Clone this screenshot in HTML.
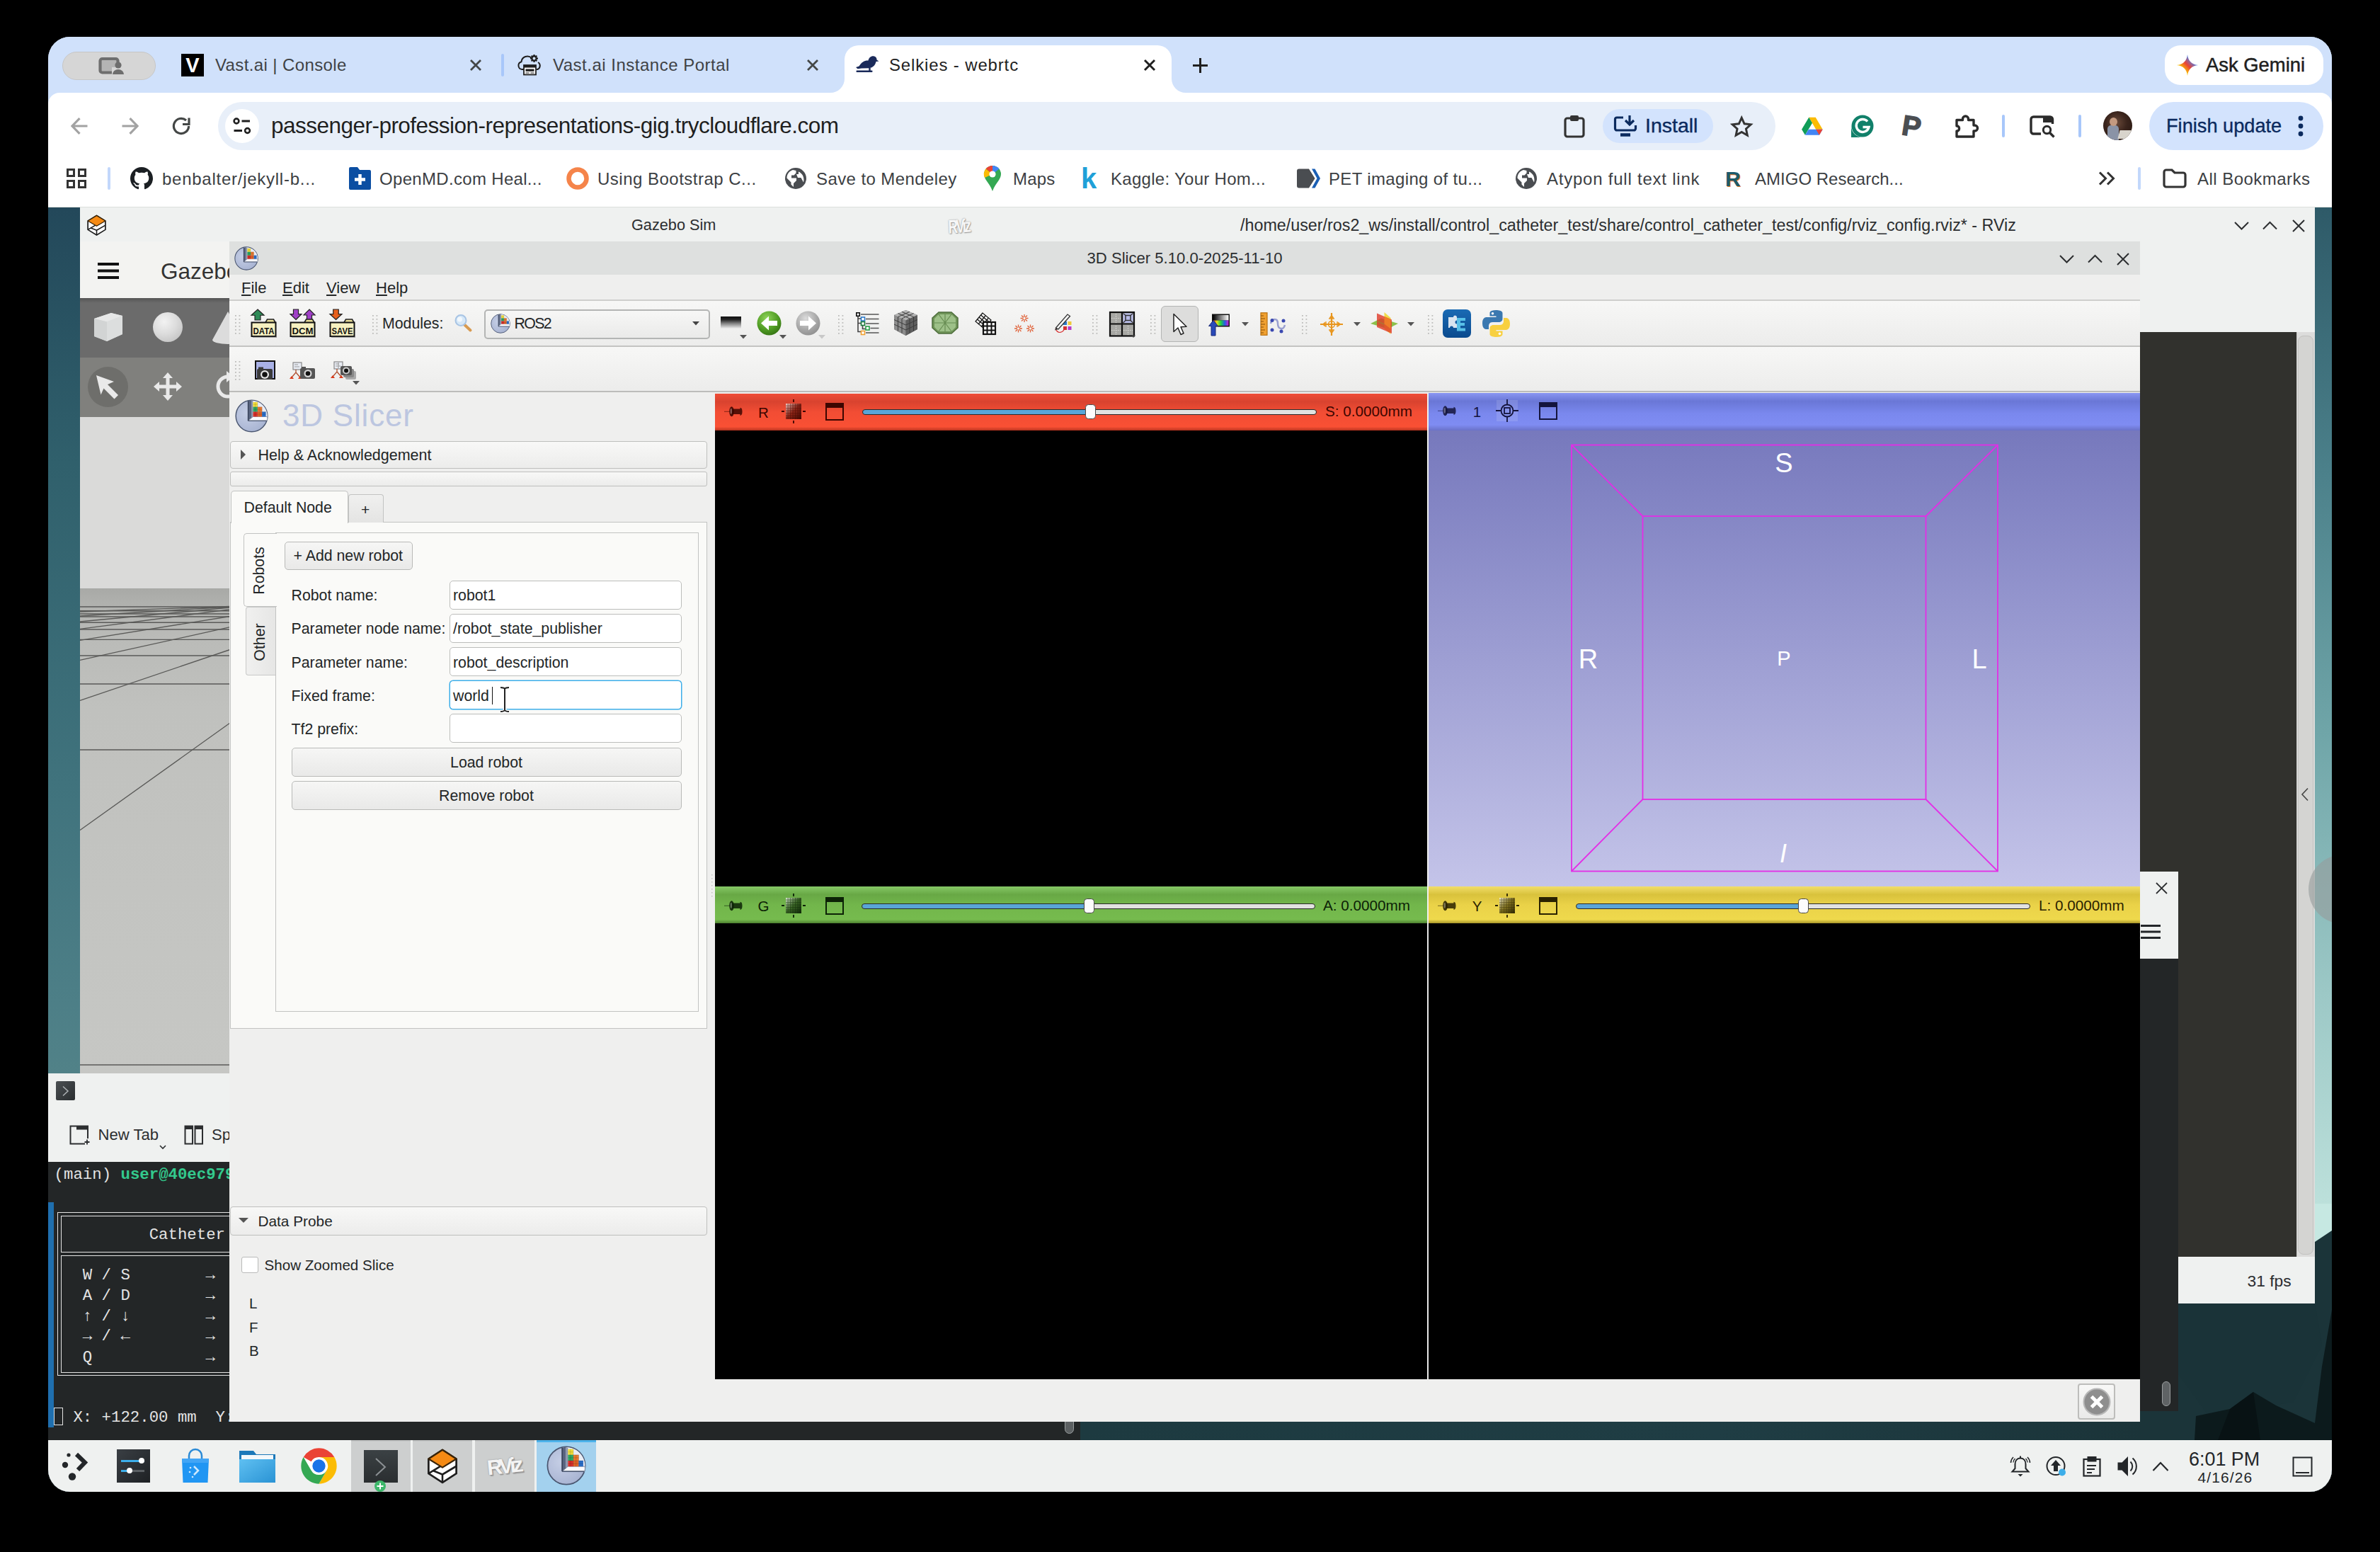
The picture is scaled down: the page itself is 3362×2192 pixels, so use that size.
<!DOCTYPE html>
<html>
<head>
<meta charset="utf-8">
<title>Selkies - webrtc</title>
<style>
*{box-sizing:border-box;margin:0;padding:0}
html,body{width:3362px;height:2192px;background:#000;overflow:hidden}
body{font-family:"Liberation Sans",sans-serif;color:#1f1f1f;position:relative}
.a{position:absolute}
.t{position:absolute;white-space:nowrap;line-height:1}
#win{position:absolute;left:68px;top:52px;width:3226px;height:2055px;border-radius:31px;overflow:hidden;background:#d0e1fb}
#g{position:absolute;left:-68px;top:-52px;width:3362px;height:2192px}
svg{position:absolute;overflow:visible}
/* chrome */
.tabt{font-size:24px;color:#3f4245;top:80px}
.bm{font-size:24px;color:#3c4043;top:240.500px}
.qt{font-size:21.3px;color:#232627}
.mono{white-space:pre;font-family:"Liberation Mono",monospace;font-size:22.350px;color:#e8e8e8}
.inp{position:absolute;left:635px;width:328px;height:41px;border:1.700px solid #bcbdbb;border-radius:5px;background:#fff;margin-top:-.7px}
.btn{position:absolute;border:1.700px solid #b9bab8;border-radius:5px;background:linear-gradient(#f6f6f5,#e9e9e8);text-align:center}
.box{position:absolute;border:1.700px solid #bebfbd;border-radius:4px;background:linear-gradient(#f8f8f7,#ececeb)}
.sl{position:absolute;height:8.500px;border-radius:4.500px;border:1.800px solid #2a2a2a;margin-top:.8px}
.hd{position:absolute;width:15px;height:21px;border-radius:4.500px;background:#fcfcfc;border:1.600px solid #4a4a4a;margin-top:.8px}
</style>
</head>
<body>
<div id="win"><div id="g">

<!-- ===== CHROME TAB STRIP ===== -->
<div class="a" id="tabstrip" style="left:68px;top:52px;width:3226px;height:80px;background:#d0e1fb"></div>
<div class="a" style="left:88px;top:73px;width:132px;height:40px;border-radius:20px;background:#d6d6d6;border:1px solid #c6c6c6"></div>
<svg style="left:138px;top:78px" width="40" height="30" viewBox="0 0 40 30"><rect x="3.5" y="5" width="25" height="19.5" rx="3" fill="#b4b4b4" stroke="#6e6e6e" stroke-width="4.2"/><rect x="20" y="17" width="20" height="12" fill="#d6d6d6"/><circle cx="29" cy="14" r="4.6" fill="#6e6e6e"/><path d="M21 27 a8 7 0 0 1 16 0 z" fill="#6e6e6e"/></svg>
<!-- tab 1 -->
<div class="a" style="left:256px;top:76px;width:32px;height:32px;background:#000"></div>
<div class="t" style="left:259px;top:78px;font-size:29px;font-weight:bold;color:#fff;width:26px;text-align:center">V</div>
<div class="t tabt" style="left:304px;letter-spacing:0.38px">Vast.ai | Console</div>
<svg style="left:664px;top:84px" width="16" height="16"><path d="M1 1L15 15M15 1L1 15" stroke="#444746" stroke-width="2.8" fill="none"/></svg>
<div class="a" style="left:708px;top:76px;width:4px;height:32px;border-radius:2px;background:#a8c7fa"></div>
<!-- tab 2 -->
<svg style="left:731px;top:76px" width="34" height="34" viewBox="0 0 34 34"><path d="M9 22 H6.5 a5.5 5.5 0 0 1 -1 -10.8 A8.5 8.5 0 0 1 20 6" fill="none" stroke="#1f1f1f" stroke-width="2"/><path d="M29 12 a5.5 5.5 0 0 1 -1 10 H27" fill="none" stroke="#1f1f1f" stroke-width="2"/><circle cx="23.5" cy="6.5" r="3.2" fill="none" stroke="#1f1f1f" stroke-width="2.4"/><path d="M23.5 1v2.2M23.5 9.8V12M18 6.5h2.2M26.8 6.5H29M19.6 2.6l1.6 1.6M25.8 8.8l1.6 1.6M27.4 2.6l-1.6 1.6M21.2 8.8l-1.6 1.6" stroke="#1f1f1f" stroke-width="2"/><rect x="9" y="16" width="17" height="13.5" fill="#fff" stroke="#1f1f1f" stroke-width="1.8"/><rect x="9" y="16" width="17" height="3.5" fill="#1f1f1f"/><rect x="11.5" y="21.5" width="12" height="3.3" fill="#1f1f1f"/><path d="M11.5 27h5M18.5 27h5" stroke="#1f1f1f" stroke-width="1.2"/></svg>
<div class="t tabt" style="left:781px;letter-spacing:0.5px">Vast.ai Instance Portal</div>
<svg style="left:1140px;top:84px" width="16" height="16"><path d="M1 1L15 15M15 1L1 15" stroke="#444746" stroke-width="2.8" fill="none"/></svg>
<!-- active tab -->
<div class="a" style="left:1193px;top:64px;width:462px;height:68px;background:#fff;border-radius:20px 20px 0 0"></div>
<svg style="left:1173px;top:111px" width="20" height="20"><path d="M20 0V20H0A20 20 0 0 0 20 0z" fill="#fff"/></svg>
<svg style="left:1655px;top:111px" width="20" height="20"><path d="M0 0V20H20A20 20 0 0 1 0 0z" fill="#fff"/></svg>
<svg style="left:1208px;top:78px" width="34" height="28" viewBox="0 0 34 28"><path d="M1 17 L5.5 15.5 C9 9.5 14 7 18.5 7.5 C19.5 3 23 0.5 27 1.5 C29.5 2.3 30.8 4.5 30.5 6.5 L33.5 8.5 L29.5 9 C28.5 14 25 17.5 20 18.2 L9 18.4 L3.5 19.3 z" fill="#1a2a5a"/><rect x="1.5" y="21.5" width="23" height="2.6" rx="1" fill="#1a2a5a"/><path d="M20.5 18 v5" stroke="#1a2a5a" stroke-width="2.4"/></svg>
<div class="t tabt" style="color:#1f1f1f;left:1256px;letter-spacing:0.85px">Selkies - webrtc</div>
<svg style="left:1616px;top:84px" width="16" height="16"><path d="M1 1L15 15M15 1L1 15" stroke="#1f1f1f" stroke-width="2.9" fill="none"/></svg>
<svg style="left:1685px;top:82px" width="21" height="21"><path d="M10.5 0V21M0 10.5H21" stroke="#1f1f1f" stroke-width="3" fill="none"/></svg>
<!-- ask gemini -->
<div class="a" style="left:3058px;top:64px;width:224px;height:56px;border-radius:22px;background:#fff"></div>
<svg style="left:3075px;top:77px" width="30" height="30" viewBox="0 0 30 30"><defs><linearGradient id="gm" x1="0" y1="1" x2="1" y2="0"><stop offset="0" stop-color="#34a853"/><stop offset=".3" stop-color="#fbbc04"/><stop offset=".5" stop-color="#ea4335"/><stop offset=".75" stop-color="#4285f4"/><stop offset="1" stop-color="#1a73e8"/></linearGradient></defs><path d="M15 0 C16 9 21 14 30 15 C21 16 16 21 15 30 C14 21 9 16 0 15 C9 14 14 9 15 0z" fill="url(#gm)"/></svg>
<div class="t" style="left:3116px;top:78px;font-size:27.4px;color:#1f1f1f;-webkit-text-stroke:0.5px #1f1f1f">Ask Gemini</div>

<!-- ===== TOOLBAR + BOOKMARKS ===== -->
<div class="a" id="toolbar" style="left:68px;top:131px;width:3226px;height:162px;background:#fff;border-radius:16px 16px 0 0"></div>
<svg style="left:100px;top:166px" width="24" height="24"><path d="M23.5 12H3M12.5 1.2L2 12l10.5 10.8" stroke="#a2a2a2" stroke-width="3.2" fill="none"/></svg>
<svg style="left:172px;top:166px" width="24" height="24"><path d="M.5 12H21M11.5 1.2L22 12 11.5 22.8" stroke="#a2a2a2" stroke-width="3.2" fill="none"/></svg>
<svg style="left:242px;top:164px" width="28" height="28" viewBox="0 0 28 28"><path d="M24.6 14 A10.6 10.6 0 1 1 21 6" stroke="#444746" stroke-width="3.2" fill="none"/><path d="M25 2.5v9h-9" stroke="#444746" stroke-width="3.2" fill="none"/></svg>
<div class="a" style="left:308px;top:144px;width:2200px;height:68px;border-radius:34px;background:#e8eff9"></div>
<div class="a" style="left:318px;top:154px;width:48px;height:48px;border-radius:24px;background:#fff"></div>
<svg style="left:329px;top:165px" width="26" height="26" viewBox="0 0 26 26"><circle cx="5" cy="6" r="3.4" fill="none" stroke="#1f1f1f" stroke-width="2.6"/><path d="M12.5 6H24" stroke="#1f1f1f" stroke-width="2.8"/><circle cx="20.5" cy="19.5" r="3.4" fill="none" stroke="#1f1f1f" stroke-width="2.6"/><path d="M1.5 19.5H13" stroke="#1f1f1f" stroke-width="2.8"/></svg>
<div class="t" style="left:383px;top:161.500px;font-size:31.500px;letter-spacing:-0.52px;color:#1f1f1f">passenger-profession-representations-gig.trycloudflare.com</div>
<!-- clipboard -->
<svg style="left:2209px;top:161px" width="30" height="34" viewBox="0 0 30 34"><rect x="2" y="6" width="26" height="26" rx="3" fill="none" stroke="#333" stroke-width="3.2"/><rect x="9" y="2" width="12" height="8" rx="2" fill="#333"/></svg>
<div class="a" style="left:2264px;top:154px;width:156px;height:48px;border-radius:24px;background:#d3e3fd"></div>
<svg style="left:2279px;top:163px" width="34" height="30" viewBox="0 0 34 30"><path d="M14 3H5a2.5 2.5 0 0 0 -2.5 2.5v13A2.5 2.5 0 0 0 5 21h24a2.5 2.5 0 0 0 2.500 -2.500V14" fill="none" stroke="#0b2a5e" stroke-width="3.2"/><path d="M10 27.500h14" stroke="#0b2a5e" stroke-width="4.500"/><path d="M23 0v12M17 7l6 6 6-6" fill="none" stroke="#0b2a5e" stroke-width="3.2"/></svg>
<div class="t" style="left:2324px;top:163px;font-size:28.5px;color:#0b2a5e;-webkit-text-stroke:0.4px #0b2a5e">Install</div>
<svg style="left:2444.500px;top:163.500px" width="30.500" height="29" viewBox="0 0 34 32"><path d="M17 2.500l4.300 9.400 10.200 1.100-7.600 6.900 2.100 10.100L17 24.900 8 30l2.100-10.100-7.600-6.900 10.200-1.100z" fill="none" stroke="#333" stroke-width="3.300"/></svg>
<!-- extensions -->
<svg style="left:2545px;top:165px" width="30" height="26.500" viewBox="0 0 36 32"><path d="M12.300 1h11.400l12 20.500H24.300z" fill="#fbbc04"/><path d="M12.300 1L0 21.500 5.800 31 18 10.500z" fill="#0f9d58"/><path d="M11.800 21.500h24L30 31H5.800z" fill="#4285f4"/><path d="M24.300 21.500H35.700L30 31z" fill="#ea4335"/></svg>
<svg style="left:2615px;top:162px" width="32" height="32" viewBox="0 0 32 32"><circle cx="16" cy="16" r="15.500" fill="#11806a"/><path d="M0 16V32H16A16 16 0 0 1 0 16z" fill="#11806a"/><path d="M23 9.500A9 9 0 1 0 25 17.500H16.500" fill="none" stroke="#fff" stroke-width="3.400"/></svg>
<div class="t" style="left:2687px;top:158px;font-size:40px;font-weight:bold;color:#4b4e52;transform:rotate(9deg);-webkit-text-stroke:1.500px #4b4e52">P</div>
<svg style="left:2760px;top:160px" width="36" height="36" viewBox="0 0 36 36"><path d="M4 9.500h8.500V8a4 4 0 0 1 8 0v1.500H28V17h1.500a4 4 0 0 1 0 8H28v8H4v-8h1.500a4 4 0 0 0 0 -7H4z" fill="none" stroke="#2b2b2b" stroke-width="3.400" stroke-linejoin="round"/></svg>
<div class="a" style="left:2828px;top:162px;width:4px;height:32px;border-radius:2px;background:#a8c7fa"></div>
<svg style="left:2866px;top:163px" width="38" height="32" viewBox="0 0 38 32"><path d="M17 26H6.500A3.500 3.500 0 0 1 3 22.500v-17A3.500 3.500 0 0 1 6.500 2H30a3.500 3.500 0 0 1 3.500 3.500V12" fill="none" stroke="#2b2b2b" stroke-width="3.400"/><rect x="20" y="2" width="13.500" height="8" fill="#2b2b2b"/><circle cx="25.500" cy="20.500" r="5.200" fill="none" stroke="#2b2b2b" stroke-width="3"/><path d="M29.500 24.500l6 6" stroke="#2b2b2b" stroke-width="3.400"/></svg>
<div class="a" style="left:2936px;top:162px;width:4px;height:32px;border-radius:2px;background:#a8c7fa"></div>
<div class="a" style="left:2971px;top:157px;width:41px;height:41px;border-radius:50%;background:radial-gradient(circle at 45% 40%,#6a4a3a 0,#3a241c 45%,#24150f 100%);overflow:hidden"><div class="a" style="left:6px;top:20px;width:16px;height:22px;background:#8a93a6;border-radius:5px 5px 0 0"></div><div class="a" style="left:9px;top:9px;width:11px;height:12px;border-radius:50%;background:#c49a80"></div><div class="a" style="left:22px;top:27px;width:18px;height:12px;background:#d8d4cc;transform:skewX(-15deg)"></div></div>
<div class="a" style="left:3036px;top:144px;width:246px;height:68px;border-radius:34px;background:#d3e3fd"></div>
<div class="t" style="left:3060px;top:164px;font-size:27.2px;color:#0b2a5e;-webkit-text-stroke:0.35px #0b2a5e">Finish update</div>
<svg style="left:3246px;top:163px" width="8" height="30"><circle cx="4" cy="4" r="3.400" fill="#0b2a5e"/><circle cx="4" cy="15" r="3.400" fill="#0b2a5e"/><circle cx="4" cy="26" r="3.400" fill="#0b2a5e"/></svg>

<!-- bookmarks -->
<svg style="left:94px;top:238px" width="28" height="28"><g fill="none" stroke="#333" stroke-width="3"><rect x="1.500" y="1.500" width="9" height="9"/><rect x="17.500" y="1.500" width="9" height="9"/><rect x="1.500" y="17.500" width="9" height="9"/><rect x="17.500" y="17.500" width="9" height="9"/></g></svg>
<div class="a" style="left:152px;top:236px;width:4px;height:32px;border-radius:2px;background:#c2d7fb"></div>
<svg style="left:184px;top:236px" width="32" height="32" viewBox="0 0 16 16"><path fill="#1b1f23" d="M8 0C3.580 0 0 3.580 0 8c0 3.540 2.290 6.530 5.470 7.590.4.070.55-.17.55-.38 0-.19-.010-.82-.010-1.490-2.010.37-2.530-.49-2.690-.94-.09-.23-.48-.94-.82-1.130-.28-.15-.68-.52-.010-.53.63-.010 1.080.58 1.230.82.720 1.210 1.870.87 2.330.66.070-.52.280-.87.510-1.070-1.780-.2-3.640-.89-3.640-3.950 0-.87.310-1.590.82-2.150-.08-.2-.36-1.020.08-2.120 0 0 .67-.21 2.200.82.640-.18 1.320-.27 2-.27s1.360.09 2 .27c1.530-1.040 2.200-.82 2.200-.82.440 1.100.16 1.920.08 2.120.51.560.82 1.270.82 2.150 0 3.070-1.870 3.750-3.650 3.950.29.250.54.730.54 1.480 0 1.070-.010 1.930-.010 2.200 0 .21.150.46.55.38A8.013 8.013 0 0 0 16 8c0-4.420-3.580-8-8-8z"/></svg>
<div class="t bm" style="left:229px;letter-spacing:0.74px">benbalter/jekyll-b...</div>
<svg style="left:493px;top:236px" width="31" height="32" viewBox="0 0 31 32"><path d="M2 0h10l3 4h14a2 2 0 0 1 2 2v24a2 2 0 0 1 -2 2H2a2 2 0 0 1 -2 -2V2a2 2 0 0 1 2 -2z" fill="#0b4ea2"/><path d="M15.500 10v15M8 17.500h15" stroke="#fff" stroke-width="4.500"/></svg>
<div class="t bm" style="left:536px;letter-spacing:0.32px">OpenMD.com Heal...</div>
<svg style="left:799px;top:235px" width="34" height="34"><circle cx="17" cy="17" r="12.500" fill="none" stroke="#f5844a" stroke-width="6.500"/></svg>
<div class="t bm" style="left:844px;letter-spacing:0.49px">Using Bootstrap C...</div>
<svg class="globe" style="left:1108px;top:236px" width="32" height="32" viewBox="0 0 32 32"><circle cx="16" cy="16" r="15" fill="#4a4d51"/><path d="M13 4c-5 1.500-8.500 6-8.500 11.500l6 6v3l3.500 3.500v-5l4-4v-3.500h-7v-4h3.500l3-3V5z" fill="#fff" transform="translate(-1,0)"/><path d="M20 6.500v3.500h-3l2 5h4.500l3.500 6.500c1.500-6.500-1-12.500-7-15z" fill="#fff"/></svg>
<div class="t bm" style="left:1153px;letter-spacing:0.41px">Save to Mendeley</div>
<svg style="left:1390px;top:234px" width="24" height="36" viewBox="0 0 24 36"><path d="M12 0a12 12 0 0 1 12 12c0 8-9 14-12 24C9 26 0 20 0 12A12 12 0 0 1 12 0z" fill="#34a853"/><path d="M12 0a12 12 0 0 1 9.500 4.600L12 12z" fill="#4285f4"/><path d="M12 0A12 12 0 0 0 2.600 4.500L12 12z" fill="#ea4335"/><path d="M2.600 4.500A12 12 0 0 0 1 17l11-5z" fill="#fbbc04"/><path d="M21.500 4.600A12 12 0 0 1 23.500 15L12 12z" fill="#1a73e8" opacity=".0"/><circle cx="12" cy="12" r="4.600" fill="#fff"/></svg>
<div class="t bm" style="left:1431px;letter-spacing:0.15px">Maps</div>
<div class="t" style="left:1527px;top:231.500px;font-size:40px;font-weight:bold;color:#1fa0d8">k</div>
<div class="t bm" style="left:1569px;letter-spacing:0.29px">Kaggle: Your Hom...</div>
<svg style="left:1832px;top:237px" width="33" height="30" viewBox="0 0 33 30"><path d="M3 1.500h14l8.500 13.500L17 28.500H3a3 3 0 0 1 -3 -3v-21a3 3 0 0 1 3 -3z" fill="#4a4d51"/><path d="M21 1.500h4.500L33 15l-7.500 13.500H21L28.500 15z" fill="#1b5fb4"/></svg>
<div class="t bm" style="left:1877px;letter-spacing:0.35px">PET imaging of tu...</div>
<svg style="left:2140px;top:236px" width="32" height="32" viewBox="0 0 32 32"><circle cx="16" cy="16" r="15" fill="#4a4d51"/><path d="M13 4c-5 1.500-8.500 6-8.500 11.500l6 6v3l3.500 3.500v-5l4-4v-3.500h-7v-4h3.500l3-3V5z" fill="#fff" transform="translate(-1,0)"/><path d="M20 6.500v3.500h-3l2 5h4.500l3.500 6.500c1.500-6.500-1-12.500-7-15z" fill="#fff"/></svg>
<div class="t bm" style="left:2185px;letter-spacing:0.77px">Atypon full text link</div>
<div class="t" style="left:2437px;top:238px;font-size:30px;font-weight:bold;color:#1d5a6b;text-shadow:1.300px 1.300px 0 #e8792a">R</div>
<div class="t bm" style="left:2479px;letter-spacing:0.01px">AMIGO Research...</div>
<svg style="left:2964px;top:242px" width="24" height="20"><path d="M2 1.500l8.500 8.500L2 18.500M13 1.500l8.500 8.500-8.500 8.500" fill="none" stroke="#333" stroke-width="3"/></svg>
<div class="a" style="left:3020px;top:236px;width:4px;height:32px;border-radius:2px;background:#c2d7fb"></div>
<svg style="left:3055px;top:238px" width="34" height="28" viewBox="0 0 34 28"><path d="M2 5a3 3 0 0 1 3 -3h8l4 4h12a3 3 0 0 1 3 3v14a3 3 0 0 1 -3 3H5a3 3 0 0 1 -3 -3z" fill="none" stroke="#333" stroke-width="3.200"/></svg>
<div class="t bm" style="left:3104px;letter-spacing:0.46px">All Bookmarks</div>
<div class="a" style="left:68px;top:291.500px;width:3226px;height:2px;background:#dcdfdc"></div>

<!-- ===== REMOTE DESKTOP CONTENT ===== -->
<div class="a" id="desk" style="left:68px;top:293px;width:3226px;height:1814px;background:linear-gradient(#23485a 0,#30606c 20%,#40737d 45%,#4d7f87 62%,#538388 70%,#1e3d44 84%,#1b3439 100%)"></div>
<div class="a" style="left:3270px;top:293px;width:24px;height:1480px;background:linear-gradient(#2e5a68 0,#4b808a 25%,#6fa5a8 50%,#9cc8c6 75%,#c4e6e0 100%)"></div>
<svg style="left:3000px;top:1700px" width="294" height="334" viewBox="3000 1700 294 334"><rect x="3000" y="1700" width="294" height="334" fill="#1b3439"/><path d="M3270 1700h24v38l-24 16z" fill="#c6e8e2"/><path d="M3077 1840h193l10 60-40 80-120 20-43-60z" fill="#1a3338"/><path d="M3100 2034l2-34 48-10 33-24 32 19 55 25 10-80 14-80v184z" fill="#0c1a1c"/><path d="M3150 1990l33-24 10 68h-60z" fill="#081214"/></svg>
<div class="a" style="left:1526px;top:2008px;width:1500px;height:26px;background:linear-gradient(90deg,#1d3a40,#1f3d44 60%,#1b3439)"></div>
<!--RIGHTBG-->
<!-- kde titlebars gazebo/rviz -->
<div class="a" style="left:113px;top:293px;width:3157px;height:48px;background:#eff1f0"></div>
<!-- gazebo -->
<svg style="left:122px;top:302px" width="29" height="32" viewBox="0 0 34 36"><path d="M17 2L31.500 11v14.500L17 34.500 2.500 25.500V11z" fill="#fff" stroke="#1e1e1e" stroke-width="2" stroke-linejoin="round"/><path d="M2.500 25.500L17 17M17 26.500l14.500-8.300M17 26.500v8M7.500 22.800l9.500 3.700" fill="none" stroke="#1e1e1e" stroke-width="1.900" stroke-linejoin="round"/><path d="M17 2L31.500 11 17 19.500 2.500 11z" fill="#f58a14" stroke="#3a2408" stroke-width="1.600" stroke-linejoin="round"/><path d="M17 26.500l14.500-8.300V11l-11 6.400-13.500 5.600z" fill="#d4d6d2" opacity="0"/></svg>
<div class="t" style="left:892px;top:307px;font-size:21.700px;color:#2c2e30">Gazebo Sim</div>
<div class="t" style="left:1338.500px;top:306.500px;font-size:19px;font-weight:bold;color:#f7f7f7;letter-spacing:-2.700px;transform:scale(1,1.42) rotate(-3deg);transform-origin:0 0;text-shadow:0 0 1.500px #8a8a8a,.8px .8px 1px #a0a0a0">RViz</div>
<div class="t" style="left:1752px;top:307px;font-size:23.300px;color:#2c2e30">/home/user/ros2_ws/install/control_catheter_test/share/control_catheter_test/config/rviz_config.rviz* - RViz</div>
<svg style="left:3155px;top:310px" width="104" height="18"><g fill="none" stroke="#2c2e30" stroke-width="2"><path d="M2 4l9.500 9.500L21 4"/><path d="M42 13.500L51.500 4 61 13.500"/><path d="M84 1l16 16M100 1L84 17"/></g></svg>
<div class="a" style="left:113px;top:341px;width:300px;height:81px;background:#f3f3f1"></div>
<div class="a" style="left:138px;top:371px;width:30px;height:3.500px;background:#111;box-shadow:0 9.500px 0 #111,0 19px 0 #111"></div>
<div class="t" style="left:227px;top:367.500px;font-size:31.500px;color:#333">Gazebo</div>
<div class="a" style="left:113px;top:421px;width:300px;height:85px;background:linear-gradient(#555 0,#6b6b6b 8%,#6b6b6b 100%)"></div>
<div class="a" style="left:113px;top:505px;width:300px;height:85px;background:#80807d"></div>
<svg style="left:131px;top:440px" width="44" height="44" viewBox="0 0 44 44"><path d="M2 10L26 2l16 4v26L20 42 2 35z" fill="#d6d8d8"/><path d="M2 10l18 4.500L42 6 26 2z" fill="#e6e7e7"/><path d="M20 14.500V42L2 35V10z" fill="#d2d4d4"/><path d="M20 14.500L42 6v26L20 42z" fill="#dcdede"/></svg>
<div class="a" style="left:216px;top:441px;width:42px;height:42px;border-radius:50%;background:radial-gradient(circle at 38% 32%,#f2f2f2 0,#dcdcdc 45%,#b8b8b8 100%)"></div>
<svg style="left:300px;top:440px" width="44" height="44"><path d="M22 0L44 40a22 6 0 0 1 -44 0z" fill="#dcdcdc"/></svg>
<div class="a" style="left:124px;top:518px;width:57px;height:57px;border-radius:50%;background:#6e6e6b"></div>
<svg style="left:134px;top:528px" width="40" height="40" viewBox="0 0 40 40"><path d="M2 2l25 9-9 4 15 15-5.500 5.500-15-15-4 9z" fill="#e9e9e9"/></svg>
<svg style="left:217px;top:526px" width="40" height="40" viewBox="0 0 40 40"><path d="M20 0l7 8h-4.500v9.500H32V13l8 7-8 7v-4.500h-9.500V32H27l-7 8-7-8h4.500v-9.500H8V27l-8-7 8-7v4.500h9.500V8H13z" fill="#e9e9e9"/></svg>
<svg style="left:300px;top:524px" width="44" height="44" viewBox="0 0 44 44"><path d="M36 22a14 14 0 1 1 -14 -14" fill="none" stroke="#e9e9e9" stroke-width="5"/><path d="M20 0l10 8-10 8z" fill="#e9e9e9"/></svg>
<div class="a" style="left:113px;top:589px;width:300px;height:243px;background:#dadad9"></div>
<div class="a" style="left:113px;top:831px;width:300px;height:686px;background:linear-gradient(#a8a9a6 0,#b2b3b0 4%,#babbb8 10%,#c0c1be 25%,#c6c7c4 100%)"></div>
<svg style="left:113px;top:830px" width="212" height="687" viewBox="113 830 212 687"><g stroke="#5a5a58" stroke-width="1.350" fill="none"><path d="M113 857H325M113 862.700H325M113 867H325M113 871H325M113 879.200H325M113 889H325M113 903.300H325M113 926H325M113 966H325M113 1059H325"/><path d="M113 1504H325" stroke-width="1.600"/><path d="M113 904.300L325 870.500M113 932.400L325 885.700M113 989.400L325 917.500M113 1172.500L325 1021M113 888.400L325 860.700M113 878L325 858M113 870L325 857M113 864L325 856.500"/></g></svg>
<!-- rviz right side -->
<div class="a" style="left:3000px;top:341px;width:270px;height:129px;background:#eff1f0"></div>
<div class="a" style="left:3000px;top:469px;width:244px;height:1306px;background:#31312d"></div>
<div class="a" style="left:3244px;top:469px;width:26px;height:1306px;background:#dcdcdb;border-left:1px solid #c8c8c6"></div>
<div class="a" style="left:3246px;top:474px;width:22px;height:1298px;border-radius:8px;border:1px solid #c2c2c0;background:#d4d4d2"></div>
<svg style="left:3250px;top:1112px" width="12" height="20"><path d="M10 1.500L2 10l8 8.500" fill="none" stroke="#444" stroke-width="1.600"/></svg>
<div class="a" style="left:3077px;top:1775px;width:193px;height:66px;background:#eff1f0"></div>
<div class="t" style="left:3174.500px;top:1798px;font-size:22.800px;color:#2c2e30">31 fps</div>
<div class="a" style="left:3023px;top:1354px;width:54px;height:639px;background:#232627"></div>
<div class="a" style="left:3054px;top:1951px;width:12px;height:35px;border-radius:6px;background:#5f6365;border:1.500px solid #9a9e9f"></div>
<div class="a" style="left:3023px;top:1231px;width:54px;height:123px;background:#eff1f0"></div>
<svg style="left:3045px;top:1246px" width="17" height="17"><path d="M1 1l15 15M16 1L1 16" stroke="#2c2e30" stroke-width="1.800"/></svg>
<div class="a" style="left:3024px;top:1306px;width:28px;height:2.500px;background:#232629;box-shadow:0 8.500px 0 #232629,0 17px 0 #232629"></div>
<div class="a" style="left:3261px;top:1207px;width:98px;height:98px;border-radius:50%;background:rgba(150,156,156,.62)"></div>
<!-- konsole -->
<div class="a" style="left:68px;top:1516px;width:1500px;height:126px;background:#eff1f0"></div>
<div class="a" style="left:79px;top:1527px;width:27px;height:27px;border-radius:2px;background:linear-gradient(135deg,#4a4f52,#2a2e30)"></div>
<svg style="left:86px;top:1533px" width="14" height="16"><path d="M3 1.500l7 6.500-7 6.500" fill="none" stroke="#aeb3b5" stroke-width="1.500"/></svg>
<svg style="left:98px;top:1588px" width="30" height="30" viewBox="0 0 30 30"><path d="M22 27.500H1.500V2.500H26V20" fill="none" stroke="#2c2e30" stroke-width="2"/><rect x="10" y="2.500" width="16" height="5" fill="#2c2e30"/><path d="M25 21.500v7M21.500 25h7" stroke="#2c2e30" stroke-width="1.800"/></svg>
<div class="t" style="left:138.500px;top:1592px;font-size:22.100px;color:#2c2e30">New Tab</div>
<svg style="left:225px;top:1617px" width="10" height="7"><path d="M1 1l4 4 4-4" fill="none" stroke="#2c2e30" stroke-width="1.600"/></svg>
<svg style="left:260px;top:1589px" width="28" height="28" viewBox="0 0 28 28"><rect x="1.500" y="1.500" width="10.500" height="25" fill="none" stroke="#2c2e30" stroke-width="2"/><rect x="15.500" y="1.500" width="10.500" height="25" fill="none" stroke="#2c2e30" stroke-width="2"/><rect x="1.500" y="1.500" width="10.500" height="4.500" fill="#2c2e30"/><rect x="15.500" y="1.500" width="10.500" height="4.500" fill="#2c2e30"/></svg>
<div class="t" style="left:299px;top:1592px;font-size:22.100px;color:#2c2e30">Split View</div>
<div class="a" style="left:68px;top:1641px;width:1458px;height:394px;background:#232627"></div>
<div class="a" style="left:68px;top:1698px;width:8px;height:318px;background:#1f6fae"></div>
<div class="a" style="left:1503.500px;top:2007px;width:13px;height:18px;border-radius:0 0 6.500px 6.500px;background:#5c6062;border:1.500px solid #9a9e9f"></div>
<div class="a" style="left:81px;top:1712px;width:400px;height:231px;border:1.800px solid #e4e4e4"></div>
<div class="a" style="left:85.500px;top:1716.500px;width:400px;height:52.500px;border:1.800px solid #e4e4e4"></div>
<div class="a" style="left:85.500px;top:1773px;width:400px;height:165.500px;border:1.800px solid #e4e4e4"></div>
<div class="a" style="left:76px;top:1988px;width:13px;height:25px;border:1.800px solid #e4e4e4"></div>
<div class="t mono" style="left:76.6px;top:1647.5px;color:#e4e4e4;">(main)</div>
<div class="t mono" style="left:170.5px;top:1647.5px;color:#33c98d;font-weight:bold;">user@40ec979a2b1c</div>
<div class="t mono" style="left:210.7px;top:1733.0px;color:#e4e4e4;">Catheter</div>
<div class="t mono" style="left:116.8px;top:1790.1px;color:#e4e4e4;">W / S</div>
<div class="t mono" style="left:290.500px;top:1790.1px;color:#e4e4e4">→</div>
<div class="t mono" style="left:116.8px;top:1819.3px;color:#e4e4e4;">A / D</div>
<div class="t mono" style="left:290.500px;top:1819.3px;color:#e4e4e4">→</div>
<div class="t mono" style="left:116.8px;top:1848.0px;color:#e4e4e4;">↑ / ↓</div>
<div class="t mono" style="left:290.500px;top:1848.0px;color:#e4e4e4">→</div>
<div class="t mono" style="left:116.8px;top:1876.0px;color:#e4e4e4;">→ / ←</div>
<div class="t mono" style="left:290.500px;top:1876.0px;color:#e4e4e4">→</div>
<div class="t mono" style="left:116.8px;top:1905.7px;color:#e4e4e4;">Q</div>
<div class="t mono" style="left:290.500px;top:1905.7px;color:#e4e4e4">→</div>
<div class="t mono" style="left:103.4px;top:1990.5px;color:#e4e4e4;">X: +122.00 mm  Y: +0.00 mm</div>
<!-- ===== SLICER WINDOW ===== -->
<div class="a" id="slicer" style="left:324px;top:341px;width:2699px;height:1667px;background:#efefee"></div>
<div class="a" style="left:324px;top:341px;width:2699px;height:47px;background:#dee0df"></div>
<div class="t" style="left:324px;top:354px;width:2699px;text-align:center;font-size:22.100px;color:#2c2e30">3D Slicer 5.10.0-2025-11-10</div>
<svg style="left:2908px;top:357px" width="104" height="18"><g fill="none" stroke="#2c2e30" stroke-width="2"><path d="M2 4l9.500 9.500L21 4"/><path d="M42 13.500L51.500 4 61 13.500"/><path d="M83 1l16 16M99 1L83 17"/></g></svg>
<div class="a" style="left:324px;top:388px;width:2699px;height:36px;background:#efefee"></div>
<div class="a" style="left:324px;top:423px;width:2699px;height:2px;background:#cfcfcd"></div>
<div class="t qt" style="left:341px;top:396px;font-size:22px"><u>F</u>ile</div>
<div class="t qt" style="left:399px;top:396px;font-size:22px"><u>E</u>dit</div>
<div class="t qt" style="left:461px;top:396px;font-size:22px"><u>V</u>iew</div>
<div class="t qt" style="left:531px;top:396px;font-size:22px"><u>H</u>elp</div>
<div class="a" style="left:324px;top:425px;width:2699px;height:64px;background:linear-gradient(#f7f7f6,#ececeb)"></div>
<div class="a" style="left:324px;top:488px;width:2699px;height:2px;background:#c4c4c2"></div>
<div class="a" style="left:324px;top:490px;width:2699px;height:63px;background:linear-gradient(#f7f7f6,#ececeb)"></div>
<div class="a" style="left:324px;top:552px;width:2699px;height:2px;background:#bcbcba"></div>
<svg style="left:330.5px;top:347.5px" width="34" height="34" viewBox="0 0 48 48"><defs><radialGradient id="sla" cx=".38" cy=".4" r=".75"><stop offset="0" stop-color="#c6cfe6"/><stop offset="1" stop-color="#a3afcf"/></radialGradient></defs><circle cx="24" cy="24" r="22.800" fill="url(#sla)" stroke="#4a5670" stroke-width="1.500"/><path d="M19 31V2.200A22.800 22.800 0 0 1 45.700 31z" fill="#e9ecf4"/><path d="M19 31V2.200l4.500-.8V27z" fill="#5a6580"/><path d="M23.500 1.500l2.500 1V25l-2.500 2z" fill="#8a94ad"/><path d="M19 31l7-6h20.500c.3 2 .2 4-.3 6z" fill="#fbfbfd" stroke="#7a849c" stroke-width=".8"/><path d="M19 31h26.800" stroke="#4a5670" stroke-width="1.300"/><path d="M19 31V2.200" stroke="#3a445c" stroke-width="1.600"/><rect x="26" y="4" width="6.500" height="7" fill="#f2de3a"/><rect x="26" y="11" width="6.500" height="7" fill="#2fa862"/><rect x="26" y="18" width="6.500" height="7" fill="#d8302a"/><rect x="32.500" y="11" width="6.500" height="7" fill="#e87a30"/><rect x="32.500" y="18" width="6.500" height="7" fill="#e06428"/><rect x="39" y="18" width="5.500" height="7" fill="#2a6cc4"/><path d="M26 11h13M26 18h18.500M32.500 4v21M39 11v14M29.200 4v21M35.700 11v14M26 7.500h6.500M26 14.500h13M26 21.500h18.500" stroke="#000" stroke-opacity=".22" stroke-width=".6"/></svg>
<svg style="left:332px;top:443px" width="9" height="30"><rect x="0" y="2" width="1.800" height="1.800" fill="#bdbdbb"/><rect x="5.500" y="2" width="1.800" height="1.800" fill="#bdbdbb"/><rect x="0" y="7" width="1.800" height="1.800" fill="#bdbdbb"/><rect x="5.500" y="7" width="1.800" height="1.800" fill="#bdbdbb"/><rect x="0" y="12" width="1.800" height="1.800" fill="#bdbdbb"/><rect x="5.500" y="12" width="1.800" height="1.800" fill="#bdbdbb"/><rect x="0" y="17" width="1.800" height="1.800" fill="#bdbdbb"/><rect x="5.500" y="17" width="1.800" height="1.800" fill="#bdbdbb"/><rect x="0" y="22" width="1.800" height="1.800" fill="#bdbdbb"/><rect x="5.500" y="22" width="1.800" height="1.800" fill="#bdbdbb"/><rect x="0" y="27" width="1.800" height="1.800" fill="#bdbdbb"/><rect x="5.500" y="27" width="1.800" height="1.800" fill="#bdbdbb"/></svg>
<svg style="left:355px;top:436.5px" width="18" height="15"><path d="M9.0 0L18 8.25H12.959999999999999V15H5.040000000000001V8.25H0z" fill="#2e8b57" stroke="#222" stroke-width="1.200"/></svg>
<svg style="left:353.5px;top:449px" width="37" height="28" viewBox="0 0 37 28"><path d="M21 6.500l2.500-4.500h9l2.500 4.500" fill="#e9de9a" stroke="#222" stroke-width="1.600"/><rect x="1.500" y="6.500" width="34" height="19.500" fill="#f7f1c0" stroke="#111" stroke-width="2"/><rect x="3" y="26.500" width="34" height="1.500" fill="#777" opacity=".6"/><text x="18.500" y="22.500" font-family="Liberation Sans" font-weight="bold" font-size="12.5" text-anchor="middle" fill="#111" textLength="30" lengthAdjust="spacingAndGlyphs">DATA</text></svg>
<svg style="left:410px;top:437px" width="16" height="14.5"><path d="M8.0 14.5L16 6.525H11.52V0H4.48V6.525H0z" fill="#a040c8" stroke="#222" stroke-width="1.200"/></svg>
<svg style="left:428.5px;top:436.5px" width="16" height="14.5"><path d="M8.0 0L16 7.9750000000000005H11.52V14.5H4.48V7.9750000000000005H0z" fill="#a040c8" stroke="#222" stroke-width="1.200"/></svg>
<svg style="left:409px;top:449px" width="37" height="28" viewBox="0 0 37 28"><path d="M21 6.500l2.500-4.500h9l2.500 4.500" fill="#e9de9a" stroke="#222" stroke-width="1.600"/><rect x="1.500" y="6.500" width="34" height="19.500" fill="#f7f1c0" stroke="#111" stroke-width="2"/><rect x="3" y="26.500" width="34" height="1.500" fill="#777" opacity=".6"/><text x="18.500" y="22.500" font-family="Liberation Sans" font-weight="bold" font-size="13" text-anchor="middle" fill="#111" textLength="30" lengthAdjust="spacingAndGlyphs">DCM</text></svg>
<svg style="left:466px;top:437px" width="17" height="14.5"><path d="M8.5 14.5L17 6.525H12.24V0H4.760000000000001V6.525H0z" fill="#e8601c" stroke="#222" stroke-width="1.200"/></svg>
<svg style="left:464.5px;top:449px" width="37" height="28" viewBox="0 0 37 28"><path d="M21 6.500l2.500-4.500h9l2.500 4.500" fill="#e9de9a" stroke="#222" stroke-width="1.600"/><rect x="1.500" y="6.500" width="34" height="19.500" fill="#f7f1c0" stroke="#111" stroke-width="2"/><rect x="3" y="26.500" width="34" height="1.500" fill="#777" opacity=".6"/><text x="18.500" y="22.500" font-family="Liberation Sans" font-weight="bold" font-size="12.5" text-anchor="middle" fill="#111" textLength="30" lengthAdjust="spacingAndGlyphs">SAVE</text></svg>
<svg style="left:525.5px;top:443px" width="9" height="30"><rect x="0" y="2" width="1.800" height="1.800" fill="#bdbdbb"/><rect x="5.500" y="2" width="1.800" height="1.800" fill="#bdbdbb"/><rect x="0" y="7" width="1.800" height="1.800" fill="#bdbdbb"/><rect x="5.500" y="7" width="1.800" height="1.800" fill="#bdbdbb"/><rect x="0" y="12" width="1.800" height="1.800" fill="#bdbdbb"/><rect x="5.500" y="12" width="1.800" height="1.800" fill="#bdbdbb"/><rect x="0" y="17" width="1.800" height="1.800" fill="#bdbdbb"/><rect x="5.500" y="17" width="1.800" height="1.800" fill="#bdbdbb"/><rect x="0" y="22" width="1.800" height="1.800" fill="#bdbdbb"/><rect x="5.500" y="22" width="1.800" height="1.800" fill="#bdbdbb"/><rect x="0" y="27" width="1.800" height="1.800" fill="#bdbdbb"/><rect x="5.500" y="27" width="1.800" height="1.800" fill="#bdbdbb"/></svg>
<div class="t qt" style="left:540px;top:447px;font-size:21.300px">Modules:</div>
<svg style="left:641px;top:443px" width="28" height="28" viewBox="0 0 28 28"><path d="M15 15.500l8.500 8" stroke="#d89a50" stroke-width="4" stroke-linecap="round"/><circle cx="10" cy="9.500" r="7.500" fill="#d6e8f8" stroke="#a8c4e4" stroke-width="2"/><circle cx="8.500" cy="8" r="3.500" fill="#f2f8fd"/></svg>
<div class="a" style="left:684px;top:437px;width:319px;height:42px;border:2px solid #b4b5b4;border-radius:5px;background:linear-gradient(#f7f7f6,#eaeae9)"></div>
<svg style="left:693px;top:443px" width="28" height="28" viewBox="0 0 48 48"><defs><radialGradient id="slb" cx=".38" cy=".4" r=".75"><stop offset="0" stop-color="#c6cfe6"/><stop offset="1" stop-color="#a3afcf"/></radialGradient></defs><circle cx="24" cy="24" r="22.800" fill="url(#slb)" stroke="#4a5670" stroke-width="1.500"/><path d="M19 31V2.200A22.800 22.800 0 0 1 45.700 31z" fill="#e9ecf4"/><path d="M19 31V2.200l4.500-.8V27z" fill="#5a6580"/><path d="M23.500 1.500l2.500 1V25l-2.500 2z" fill="#8a94ad"/><path d="M19 31l7-6h20.500c.3 2 .2 4-.3 6z" fill="#fbfbfd" stroke="#7a849c" stroke-width=".8"/><path d="M19 31h26.800" stroke="#4a5670" stroke-width="1.300"/><path d="M19 31V2.200" stroke="#3a445c" stroke-width="1.600"/><rect x="26" y="4" width="6.500" height="7" fill="#f2de3a"/><rect x="26" y="11" width="6.500" height="7" fill="#2fa862"/><rect x="26" y="18" width="6.500" height="7" fill="#d8302a"/><rect x="32.500" y="11" width="6.500" height="7" fill="#e87a30"/><rect x="32.500" y="18" width="6.500" height="7" fill="#e06428"/><rect x="39" y="18" width="5.500" height="7" fill="#2a6cc4"/><path d="M26 11h13M26 18h18.500M32.500 4v21M39 11v14M29.200 4v21M35.700 11v14M26 7.500h6.500M26 14.500h13M26 21.500h18.500" stroke="#000" stroke-opacity=".22" stroke-width=".6"/></svg>
<div class="t qt" style="left:726.500px;top:447px;font-size:21.300px;letter-spacing:-1.600px">ROS2</div>
<svg style="left:978px;top:454.0px" width="10" height="6"><path d="M0 0h10L5 5.500z" fill="#444"/></svg>
<div class="a" style="left:1017.500px;top:446.500px;width:29px;height:17px;background:linear-gradient(#111 0,#222 25%,#888 60%,#eee 100%)"></div>
<svg style="left:1045px;top:472.5px" width="10" height="6"><path d="M0 0h10L5 5.500z" fill="#555"/></svg>
<svg style="left:1068.500px;top:438.500px" width="35" height="35" viewBox="0 0 35 35"><defs><radialGradient id="ga" cx=".4" cy=".3" r=".8"><stop offset="0" stop-color="#8fd45a"/><stop offset=".6" stop-color="#4e9a22"/><stop offset="1" stop-color="#2f6a10"/></radialGradient></defs><circle cx="17.500" cy="17.500" r="17" fill="url(#ga)"/><path d="M6 17.500L17 7.500v6.500h12v7H17v6.500z" fill="#fff"/></svg>
<svg style="left:1100.5px;top:472.5px" width="10" height="6"><path d="M0 0h10L5 5.500z" fill="#555"/></svg>
<svg style="left:1123.500px;top:438.500px" width="35" height="35" viewBox="0 0 35 35"><defs><radialGradient id="gb" cx=".4" cy=".3" r=".8"><stop offset="0" stop-color="#dcdcdc"/><stop offset=".6" stop-color="#a6a6a6"/><stop offset="1" stop-color="#8a8a8a"/></radialGradient></defs><circle cx="17.500" cy="17.500" r="17" fill="url(#gb)"/><path d="M29 17.500L18 7.500v6.500H6v7h12v6.500z" fill="#fff"/></svg>
<svg style="left:1156px;top:472.5px" width="10" height="6"><path d="M0 0h10L5 5.500z" fill="#c8c8c8"/></svg>
<svg style="left:1183.5px;top:443px" width="9" height="30"><rect x="0" y="2" width="1.800" height="1.800" fill="#bdbdbb"/><rect x="5.500" y="2" width="1.800" height="1.800" fill="#bdbdbb"/><rect x="0" y="7" width="1.800" height="1.800" fill="#bdbdbb"/><rect x="5.500" y="7" width="1.800" height="1.800" fill="#bdbdbb"/><rect x="0" y="12" width="1.800" height="1.800" fill="#bdbdbb"/><rect x="5.500" y="12" width="1.800" height="1.800" fill="#bdbdbb"/><rect x="0" y="17" width="1.800" height="1.800" fill="#bdbdbb"/><rect x="5.500" y="17" width="1.800" height="1.800" fill="#bdbdbb"/><rect x="0" y="22" width="1.800" height="1.800" fill="#bdbdbb"/><rect x="5.500" y="22" width="1.800" height="1.800" fill="#bdbdbb"/><rect x="0" y="27" width="1.800" height="1.800" fill="#bdbdbb"/><rect x="5.500" y="27" width="1.800" height="1.800" fill="#bdbdbb"/></svg>
<svg style="left:1209px;top:441px" width="33" height="33" viewBox="0 0 33 33"><g fill="none" stroke="#444" stroke-width="1.600"><path d="M3 5v22.500h6M3 9h5M3 15.500h6M9.500 18v5.500h5"/><path d="M7 3h25.500M14 9.500h18.500M14 16h18.500M20.500 22.500h12M14 29h18.500" stroke="#555" stroke-width="1.400"/></g><rect x=".8" y=".8" width="4.500" height="4.500" fill="#fff" stroke="#111" stroke-width="1.600"/><rect x="7.500" y="7" width="5" height="5" fill="#fff" stroke="#2a78c8" stroke-width="1.600"/><rect x="7.500" y="13.500" width="5" height="5" fill="#fff" stroke="#1a7a3a" stroke-width="1.600"/><rect x="14" y="20" width="5" height="5" fill="#fff" stroke="#2aa048" stroke-width="1.600"/><rect x="7.500" y="26.500" width="5" height="5" fill="#fff" stroke="#f0a030" stroke-width="1.600"/></svg>
<svg style="left:1262px;top:437px" width="35" height="38" viewBox="0 0 35 38"><path d="M17.500 1L34 8v20L17.500 37 1 28V8z" fill="#707070"/><path d="M17.500 1L34 8 17.500 15.500 1 8z" fill="#b4b4b4"/><path d="M1 8l16.500 7.500V37L1 28z" fill="#8c8c8c"/><path d="M34 8L17.500 15.500V37L34 28z" fill="#5e5e5e"/><g stroke="#3c3c3c" stroke-width="1" fill="none"><path d="M6.500 10.500v20M12 13v20.500M23 13v20.500M28.500 10.500v20M1 14.500L17.500 22 34 14.500M1 21l16.500 8L34 21M6.500 5.500L23 13M12 3.300l16.500 7.200M28.500 5.500L12 13M23 3.300L6.500 10.500"/></g></svg>
<svg style="left:1316.500px;top:441px" width="36" height="30" viewBox="0 0 36 30"><path d="M9 0h18l9 8v14l-9 8H9l-9-8V8z" fill="#6f9458"/><path d="M9 3h18l6 6v12l-6 6H9l-6-6V9z" fill="#9dc088"/><path d="M9 3l18 24M27 3L9 27M3 15h30M18 3v24" stroke="#5a8046" stroke-width="1.200" opacity=".8"/><path d="M9 0h18l9 8v14l-9 8H9l-9-8V8z" fill="none" stroke="#4e6e3c" stroke-width="1.500"/></svg>
<svg style="left:1377px;top:441px" width="30" height="32" viewBox="0 0 30 32"><g stroke="#111" stroke-width="1.200" fill="none"><path d="M11 1L1 13l12 10L23 11z"/><path d="M8.500 4l12 10M6 7l12 10M3.500 10l12 10M5 17L15 5M9 20.500L19 8.500"/></g><rect x="12" y="14" width="17" height="17" fill="#fff" stroke="#111" stroke-width="2.200"/><path d="M17.500 14v17M23.500 14v17M12 19.500h17M12 25.500h17" stroke="#111" stroke-width="2"/></svg>
<svg style="left:1432px;top:443px" width="30" height="28"><g transform="translate(15,6.5)" stroke="#e0623a" stroke-width="1.300"><path d="M0 -5.500V-1.500M0 5.500V1.500M-5.500 0H-1.500M5.500 0H1.500M-4 -4L-1.200 -1.200M4 4L1.200 1.200M4 -4L1.200 -1.200M-4 4L-1.200 1.200"/></g><g transform="translate(6.5,21)" stroke="#e0623a" stroke-width="1.300"><path d="M0 -5.500V-1.500M0 5.500V1.500M-5.500 0H-1.500M5.500 0H1.500M-4 -4L-1.200 -1.200M4 4L1.200 1.200M4 -4L1.200 -1.200M-4 4L-1.200 1.200"/></g><g transform="translate(23.5,21)" stroke="#e0623a" stroke-width="1.300"><path d="M0 -5.500V-1.500M0 5.500V1.500M-5.500 0H-1.500M5.500 0H1.500M-4 -4L-1.200 -1.200M4 4L1.200 1.200M4 -4L1.200 -1.200M-4 4L-1.200 1.200"/></g></svg>
<svg style="left:1489px;top:442px" width="28" height="30" viewBox="0 0 28 30"><rect x="13" y="12" width="5" height="5" fill="#2a78c8"/><rect x="19.500" y="12" width="5" height="5" fill="#f0c838"/><rect x="13" y="19" width="5" height="5" fill="#d83030"/><rect x="19.500" y="19" width="5" height="5" fill="#b838c8"/><path d="M2 22c3 8 9 6 12 2" fill="none" stroke="#d83030" stroke-width="1.200"/><path d="M2.500 21L19 2l3.500 2.500L6 23z" fill="#f4f4f4" stroke="#333" stroke-width="1.300"/><path d="M2.500 21l3.500 2-5 1.500z" fill="#333"/></svg>
<svg style="left:1543px;top:443px" width="9" height="30"><rect x="0" y="2" width="1.800" height="1.800" fill="#bdbdbb"/><rect x="5.500" y="2" width="1.800" height="1.800" fill="#bdbdbb"/><rect x="0" y="7" width="1.800" height="1.800" fill="#bdbdbb"/><rect x="5.500" y="7" width="1.800" height="1.800" fill="#bdbdbb"/><rect x="0" y="12" width="1.800" height="1.800" fill="#bdbdbb"/><rect x="5.500" y="12" width="1.800" height="1.800" fill="#bdbdbb"/><rect x="0" y="17" width="1.800" height="1.800" fill="#bdbdbb"/><rect x="5.500" y="17" width="1.800" height="1.800" fill="#bdbdbb"/><rect x="0" y="22" width="1.800" height="1.800" fill="#bdbdbb"/><rect x="5.500" y="22" width="1.800" height="1.800" fill="#bdbdbb"/><rect x="0" y="27" width="1.800" height="1.800" fill="#bdbdbb"/><rect x="5.500" y="27" width="1.800" height="1.800" fill="#bdbdbb"/></svg>
<svg style="left:1567px;top:440px" width="37" height="36" viewBox="0 0 37 36"><rect x="1" y="1" width="34" height="33.500" fill="#a8a8a4" stroke="#111" stroke-width="2.200"/><path d="M18 1v33.500M1 17.500h34" stroke="#111" stroke-width="2.200"/><rect x="19.500" y="2.500" width="14" height="13.500" fill="#b8bce8"/><rect x="23" y="5.500" width="7" height="7" fill="none" stroke="#333" stroke-width="1.500"/><path d="M19.500 2.500l3.500 3M33.500 2.500l-3.500 3M19.500 16l3.500-3.500M33.500 16l-3.500-3.500" stroke="#333" stroke-width="1.200"/><path d="M9.500 3v13M3 9.500h13M9.500 20v13M3 26.500h13M26.500 20v13M20 26.500h13" stroke="#d8d8d4" stroke-width="1.200" stroke-dasharray="1.500 1.500"/><path d="M31 33.500h6l-3 3.500z" fill="#444"/></svg>
<svg style="left:1625px;top:443px" width="9" height="30"><rect x="0" y="2" width="1.800" height="1.800" fill="#bdbdbb"/><rect x="5.500" y="2" width="1.800" height="1.800" fill="#bdbdbb"/><rect x="0" y="7" width="1.800" height="1.800" fill="#bdbdbb"/><rect x="5.500" y="7" width="1.800" height="1.800" fill="#bdbdbb"/><rect x="0" y="12" width="1.800" height="1.800" fill="#bdbdbb"/><rect x="5.500" y="12" width="1.800" height="1.800" fill="#bdbdbb"/><rect x="0" y="17" width="1.800" height="1.800" fill="#bdbdbb"/><rect x="5.500" y="17" width="1.800" height="1.800" fill="#bdbdbb"/><rect x="0" y="22" width="1.800" height="1.800" fill="#bdbdbb"/><rect x="5.500" y="22" width="1.800" height="1.800" fill="#bdbdbb"/><rect x="0" y="27" width="1.800" height="1.800" fill="#bdbdbb"/><rect x="5.500" y="27" width="1.800" height="1.800" fill="#bdbdbb"/></svg>
<div class="a" style="left:1640px;top:432px;width:53px;height:51px;border:1.500px solid #b4b5b4;border-radius:6px;background:#dddddc"></div>
<svg style="left:1656px;top:442px" width="22" height="32" viewBox="0 0 22 32"><path d="M2 1.500v25l6-5.500 4 9.500 4-1.800-4-9 8-.5z" fill="#fff" stroke="#222" stroke-width="1.500" stroke-linejoin="round"/></svg>
<svg style="left:1707px;top:442px" width="32" height="33" viewBox="0 0 32 33"><rect x="5" y="1.500" width="25" height="18" fill="#111"/><rect x="6.500" y="3" width="22" height="7.500" fill="url(#wl1)"/><rect x="6.500" y="10.500" width="22" height="7.500" fill="url(#wl2)"/><defs><linearGradient id="wl1"><stop offset="0" stop-color="#000"/><stop offset="1" stop-color="#fff"/></linearGradient><linearGradient id="wl2"><stop offset="0" stop-color="#e02020"/><stop offset=".25" stop-color="#e0e020"/><stop offset=".5" stop-color="#20d040"/><stop offset=".75" stop-color="#2060e0"/><stop offset="1" stop-color="#d020d0"/></linearGradient></defs><path d="M7 10.500l6.500 8H10V32H4V18.500H.5z" fill="#2a4ab8" stroke="#1a2a78" stroke-width="1"/></svg>
<svg style="left:1754px;top:454.5px" width="10" height="6"><path d="M0 0h10L5 5.500z" fill="#555"/></svg>
<svg style="left:1780px;top:441px" width="37" height="33" viewBox="0 0 37 33"><rect x="1" y=".8" width="9" height="31.500" fill="#f0a030" stroke="#b87010" stroke-width="1.200"/><path d="M1 5h4M1 9h6M1 13h4M1 17h6M1 21h4M1 25h6M1 29h4" stroke="#8a5008" stroke-width="1"/><path d="M15 11c2-8 10-8 10 0s8 10 10 2" fill="none" stroke="#9aa0d0" stroke-width="2.500" transform="translate(0,5)"/><circle cx="17" cy="11.500" r="2.500" fill="#3a48b0"/><circle cx="33" cy="12" r="2.500" fill="#3a48b0"/><circle cx="17" cy="25" r="2.500" fill="#3a48b0"/><circle cx="30" cy="27" r="2.500" fill="#3a48b0"/></svg>
<svg style="left:1839px;top:443px" width="9" height="30"><rect x="0" y="2" width="1.800" height="1.800" fill="#bdbdbb"/><rect x="5.500" y="2" width="1.800" height="1.800" fill="#bdbdbb"/><rect x="0" y="7" width="1.800" height="1.800" fill="#bdbdbb"/><rect x="5.500" y="7" width="1.800" height="1.800" fill="#bdbdbb"/><rect x="0" y="12" width="1.800" height="1.800" fill="#bdbdbb"/><rect x="5.500" y="12" width="1.800" height="1.800" fill="#bdbdbb"/><rect x="0" y="17" width="1.800" height="1.800" fill="#bdbdbb"/><rect x="5.500" y="17" width="1.800" height="1.800" fill="#bdbdbb"/><rect x="0" y="22" width="1.800" height="1.800" fill="#bdbdbb"/><rect x="5.500" y="22" width="1.800" height="1.800" fill="#bdbdbb"/><rect x="0" y="27" width="1.800" height="1.800" fill="#bdbdbb"/><rect x="5.500" y="27" width="1.800" height="1.800" fill="#bdbdbb"/></svg>
<svg style="left:1865px;top:441.500px" width="32" height="32" viewBox="0 0 32 32"><g stroke="#e8961e" fill="none"><path d="M16 0v32M0 16h32" stroke-width="2.200"/><circle cx="16" cy="16" r="4.500" stroke-width="1.500"/><path d="M16 3l-3 4h6zM16 29l-3-4h6zM3 16l4-3v6zM29 16l-4-3v6z" fill="#e8961e" stroke-width=".8"/><path d="M12 8h8M12 24h8M8 12v8M24 12v8" stroke-width="1.300"/></g></svg>
<svg style="left:1911.5px;top:454.5px" width="10" height="6"><path d="M0 0h10L5 5.500z" fill="#555"/></svg>
<svg style="left:1936px;top:440px" width="39" height="34" viewBox="0 0 39 34"><path d="M0 17l15-7.500 24 7.500-15 7.500z" fill="#8cc04a"/><path d="M19.500 1l9 8v23l-9-8z" fill="#f0d838" opacity=".9"/><path d="M9 2.500l21 9v19.500L9 22z" fill="#e03a28" opacity=".8"/><path d="M19.500 7l9 3.800v13.700l-9-7z" fill="#f08028" opacity=".9"/><path d="M9 13.500l10.500 4.500M28.500 20.500l2 .8" stroke="#7aa83a" stroke-width="1" opacity=".6"/></svg>
<svg style="left:1987.5px;top:454.5px" width="10" height="6"><path d="M0 0h10L5 5.500z" fill="#555"/></svg>
<svg style="left:2017px;top:443px" width="9" height="30"><rect x="0" y="2" width="1.800" height="1.800" fill="#bdbdbb"/><rect x="5.500" y="2" width="1.800" height="1.800" fill="#bdbdbb"/><rect x="0" y="7" width="1.800" height="1.800" fill="#bdbdbb"/><rect x="5.500" y="7" width="1.800" height="1.800" fill="#bdbdbb"/><rect x="0" y="12" width="1.800" height="1.800" fill="#bdbdbb"/><rect x="5.500" y="12" width="1.800" height="1.800" fill="#bdbdbb"/><rect x="0" y="17" width="1.800" height="1.800" fill="#bdbdbb"/><rect x="5.500" y="17" width="1.800" height="1.800" fill="#bdbdbb"/><rect x="0" y="22" width="1.800" height="1.800" fill="#bdbdbb"/><rect x="5.500" y="22" width="1.800" height="1.800" fill="#bdbdbb"/><rect x="0" y="27" width="1.800" height="1.800" fill="#bdbdbb"/><rect x="5.500" y="27" width="1.800" height="1.800" fill="#bdbdbb"/></svg>
<div class="a" style="left:2038px;top:436.500px;width:40px;height:40px;border-radius:7px;background:linear-gradient(#1a6ab4,#0a4a8e)"></div>
<svg style="left:2044px;top:443px" width="28" height="28" viewBox="0 0 28 28"><path d="M2 5h7a2.500 2.500 0 0 1 5 0v4.500a2.500 2.500 0 0 0 0 5V20H9a2.500 2.500 0 0 0 -5 0H2z" fill="#d8e4f0"/><path d="M14 6h12v4h-7v3h6v4h-6v3.500h7v4H14z" fill="#58c0e8"/></svg>
<svg style="left:2093px;top:436.500px" width="41" height="40" viewBox="0 0 41 40"><path d="M20 1c-9 0-8.500 4-8.500 4v4.500h9V11H7S1 10.500 1 19.500 6.500 28 6.500 28H10v-4.500s-.2-5.500 5.500-5.500h9s5 0 5-5V5.500S30.500 1 20 1z" fill="#3a78b0"/><circle cx="15.500" cy="5.800" r="1.800" fill="#fff"/><path d="M21 39c9 0 8.500-4 8.500-4v-4.500h-9V29H34s6 .5 6-8.500-5.500-8.500-5.500-8.500H31v4.500s.2 5.500-5.500 5.500h-9s-5 0-5 5V34.500S10.500 39 21 39z" fill="#f8d040"/><circle cx="25.500" cy="34.200" r="1.800" fill="#fff"/></svg>
<svg style="left:332px;top:508px" width="9" height="30"><rect x="0" y="2" width="1.800" height="1.800" fill="#bdbdbb"/><rect x="5.500" y="2" width="1.800" height="1.800" fill="#bdbdbb"/><rect x="0" y="7" width="1.800" height="1.800" fill="#bdbdbb"/><rect x="5.500" y="7" width="1.800" height="1.800" fill="#bdbdbb"/><rect x="0" y="12" width="1.800" height="1.800" fill="#bdbdbb"/><rect x="5.500" y="12" width="1.800" height="1.800" fill="#bdbdbb"/><rect x="0" y="17" width="1.800" height="1.800" fill="#bdbdbb"/><rect x="5.500" y="17" width="1.800" height="1.800" fill="#bdbdbb"/><rect x="0" y="22" width="1.800" height="1.800" fill="#bdbdbb"/><rect x="5.500" y="22" width="1.800" height="1.800" fill="#bdbdbb"/><rect x="0" y="27" width="1.800" height="1.800" fill="#bdbdbb"/><rect x="5.500" y="27" width="1.800" height="1.800" fill="#bdbdbb"/></svg>
<svg style="left:359.500px;top:509px" width="30" height="29" viewBox="0 0 30 29"><rect x="1" y="1" width="27" height="25" fill="#a9b1e6" stroke="#111" stroke-width="2"/><rect x="3" y="12" width="22" height="15" rx="2" fill="#3a3a3a"/><rect x="5" y="9.500" width="7" height="3.500" fill="#3a3a3a"/><circle cx="14" cy="20" r="6" fill="#e8e8e8"/><circle cx="14" cy="20" r="3.800" fill="#111"/></svg>
<svg style="left:409px;top:511px" width="37" height="26" viewBox="0 0 37 26"><rect x="5" y="1" width="12" height="10" fill="#e8ecf4" stroke="#888" stroke-width="1.200"/><path d="M7 4h5M7 7h7" stroke="#999" stroke-width="1"/><path d="M9 11v4l-6 7M9 15l6 7" fill="none" stroke="#b05030" stroke-width="1.300"/><path d="M0 24l3-4 3 4zM12 24l3-4 3 4z" fill="#d83818"/><rect x="15" y="9" width="21" height="15" rx="2" fill="#555"/><rect x="17" y="7" width="6" height="3" fill="#555"/><circle cx="26" cy="16.500" r="5.500" fill="#d8d8d8"/><circle cx="26" cy="16.500" r="3.300" fill="#111"/></svg>
<svg style="left:467px;top:510px" width="37" height="30" viewBox="0 0 37 30"><rect x="5" y="1" width="12" height="10" fill="#e8ecf4" stroke="#888" stroke-width="1.200"/><path d="M7 4h5M7 7h7M11 2v8" stroke="#999" stroke-width="1"/><path d="M9 11v4l-6 7M9 15l6 7" fill="none" stroke="#b05030" stroke-width="1.300"/><path d="M0 24l3-4 3 4zM12 24l3-4 3 4z" fill="#d83818"/><rect x="21" y="14" width="15" height="12" rx="2" fill="#aaa"/><rect x="18" y="11" width="15" height="12" rx="2" fill="#888"/><rect x="14" y="7" width="16" height="13" rx="2" fill="#555"/><circle cx="22" cy="13.500" r="5" fill="#ccc"/><circle cx="22" cy="13.500" r="3" fill="#111"/></svg>
<svg style="left:497.5px;top:538.0px" width="10" height="6"><path d="M0 0h10L5 5.500z" fill="#555"/></svg>
<!-- left panel -->
<svg style="left:331.5px;top:563.5px" width="47" height="47" viewBox="0 0 48 48"><defs><radialGradient id="sld" cx=".38" cy=".4" r=".75"><stop offset="0" stop-color="#c6cfe6"/><stop offset="1" stop-color="#a3afcf"/></radialGradient></defs><circle cx="24" cy="24" r="22.800" fill="url(#sld)" stroke="#4a5670" stroke-width="1.500"/><path d="M19 31V2.200A22.800 22.800 0 0 1 45.700 31z" fill="#e9ecf4"/><path d="M19 31V2.200l4.500-.8V27z" fill="#5a6580"/><path d="M23.500 1.500l2.500 1V25l-2.500 2z" fill="#8a94ad"/><path d="M19 31l7-6h20.500c.3 2 .2 4-.3 6z" fill="#fbfbfd" stroke="#7a849c" stroke-width=".8"/><path d="M19 31h26.800" stroke="#4a5670" stroke-width="1.300"/><path d="M19 31V2.200" stroke="#3a445c" stroke-width="1.600"/><rect x="26" y="4" width="6.500" height="7" fill="#f2de3a"/><rect x="26" y="11" width="6.500" height="7" fill="#2fa862"/><rect x="26" y="18" width="6.500" height="7" fill="#d8302a"/><rect x="32.500" y="11" width="6.500" height="7" fill="#e87a30"/><rect x="32.500" y="18" width="6.500" height="7" fill="#e06428"/><rect x="39" y="18" width="5.500" height="7" fill="#2a6cc4"/><path d="M26 11h13M26 18h18.500M32.500 4v21M39 11v14M29.200 4v21M35.700 11v14M26 7.500h6.500M26 14.500h13M26 21.500h18.500" stroke="#000" stroke-opacity=".22" stroke-width=".6"/></svg>
<div class="t" style="left:399px;top:565px;font-size:44px;color:#bcc6e0;letter-spacing:.8px">3D Slicer</div>
<div class="box" style="left:325px;top:623px;width:674px;height:39px"></div>
<svg style="left:340px;top:635px" width="8" height="14"><path d="M0 0l7 7-7 7z" fill="#555"/></svg>
<div class="t qt" style="margin-top:1.300px;left:364.500px;top:632px;font-size:21.500px">Help &amp; Acknowledgement</div>
<div class="box" style="left:325px;top:665.500px;width:674px;height:21px;border-radius:3px"></div>
<div class="a" style="left:325px;top:737px;width:674px;height:716px;border:1.500px solid #c2c3c2;background:#fafaf8"></div>
<div class="a" style="left:325.500px;top:693px;width:166px;height:46px;border:1.500px solid #c2c3c2;border-bottom:none;border-radius:5px 5px 0 0;background:#fafaf8"></div>
<div class="t qt" style="margin-top:1.300px;left:344.500px;top:706px;font-size:21.300px">Default Node</div>
<div class="a" style="left:492px;top:697.500px;width:50px;height:40px;border:1.500px solid #c2c3c2;border-bottom:none;border-radius:4px 4px 0 0;background:linear-gradient(#f0f0ef,#e4e4e3)"></div>
<div class="t qt" style="margin-top:1.300px;left:510px;top:708px;font-size:21px">+</div>
<div class="a" style="left:388.500px;top:752px;width:598px;height:677px;border:1.500px solid #c2c3c2;background:#fafaf8"></div>
<div class="a" style="left:343.500px;top:752.500px;width:47px;height:104.500px;border:1.500px solid #c2c3c2;border-right:none;border-radius:5px 0 0 5px;background:#fafaf8"></div>
<div class="a" style="left:346.500px;top:857px;width:42px;height:97px;border:1.500px solid #c8c9c8;border-right:none;border-radius:4px 0 0 4px;background:linear-gradient(90deg,#f0f0ef,#e6e6e5)"></div>
<div class="t qt" style="margin-top:1.300px;left:366.500px;top:804.500px;font-size:21.300px;transform:translate(-50%,-50%) rotate(-90deg)">Robots</div>
<div class="t qt" style="margin-top:1.300px;left:368px;top:906px;font-size:21.300px;transform:translate(-50%,-50%) rotate(-90deg)">Other</div>
<div class="btn" style="left:402px;top:765px;width:181px;height:40px"></div>
<div class="t qt" style="margin-top:1.300px;left:414.500px;top:774px;font-size:21.300px">+ Add new robot</div>
<div class="t qt" style="margin-top:1.300px;left:411.500px;top:830.0px">Robot name:</div>
<div class="inp" style="top:820.5px"></div>
<div class="t qt" style="margin-top:1.300px;left:640px;top:830.0px">robot1</div>
<div class="t qt" style="margin-top:1.300px;left:411.500px;top:877.2px">Parameter node name:</div>
<div class="inp" style="top:867.7px"></div>
<div class="t qt" style="margin-top:1.300px;left:640px;top:877.2px">/robot_state_publisher</div>
<div class="t qt" style="margin-top:1.300px;left:411.500px;top:924.4px">Parameter name:</div>
<div class="inp" style="top:914.9px"></div>
<div class="t qt" style="margin-top:1.300px;left:640px;top:924.4px">robot_description</div>
<div class="t qt" style="margin-top:1.300px;left:411.500px;top:971.3px">Fixed frame:</div>
<div class="inp" style="top:961.8px;border-color:#3daee9;box-shadow:0 0 0 .5px #3daee9"></div>
<div class="t qt" style="margin-top:1.300px;left:640px;top:971.3px">world</div>
<div class="t qt" style="margin-top:1.300px;left:411.500px;top:1018.4px">Tf2 prefix:</div>
<div class="inp" style="top:1008.9px"></div>
<div class="a" style="left:694.500px;top:970px;width:1.800px;height:25px;background:#111"></div>
<svg style="left:705px;top:969px" width="16" height="38" viewBox="0 0 16 38"><path d="M2 2c3 0 5 .5 6 2 1-1.500 3-2 6-2M2 36c3 0 5-.5 6-2 1 1.500 3 2 6 2M8 4v30" fill="none" stroke="#fff" stroke-width="4.500"/><path d="M2 2c3 0 5 .5 6 2 1-1.500 3-2 6-2M2 36c3 0 5-.5 6-2 1 1.500 3 2 6 2M8 4v30" fill="none" stroke="#222" stroke-width="2"/></svg>
<div class="btn" style="left:411.500px;top:1056px;width:551px;height:40.500px"></div>
<div class="t qt" style="margin-top:1.300px;left:411.500px;top:1065.500px;width:551px;text-align:center">Load robot</div>
<div class="btn" style="left:411.500px;top:1103px;width:551px;height:40.500px"></div>
<div class="t qt" style="margin-top:1.300px;left:411.500px;top:1112.500px;width:551px;text-align:center">Remove robot</div>
<div class="box" style="left:325px;top:1704px;width:674px;height:41px"></div>
<svg style="left:337px;top:1720px" width="14" height="8"><path d="M0 0h14l-7 7z" fill="#555"/></svg>
<div class="t qt" style="margin-top:1.300px;left:364.500px;top:1714px;font-size:20.800px">Data Probe</div>
<div class="a" style="left:341px;top:1775px;width:23.500px;height:23px;border:1.500px solid #b9bab9;border-radius:3px;background:#fff"></div>
<div class="t qt" style="margin-top:1.300px;left:373.500px;top:1776px;font-size:20.600px">Show Zoomed Slice</div>
<div class="t qt" style="margin-top:1.300px;left:352px;top:1829.9px;font-size:20.500px">L</div>
<div class="t qt" style="margin-top:1.300px;left:352px;top:1863.7px;font-size:20.500px">F</div>
<div class="t qt" style="margin-top:1.300px;left:352px;top:1897.1px;font-size:20.500px">B</div>
<svg style="left:1004px;top:1235px" width="4" height="34"><g fill="#c4c4c2"><rect x="1" y="0" width="1.500" height="1.500"/><rect x="1" y="5" width="1.500" height="1.500"/><rect x="1" y="10" width="1.500" height="1.500"/><rect x="1" y="15" width="1.500" height="1.500"/><rect x="1" y="20" width="1.500" height="1.500"/><rect x="1" y="25" width="1.500" height="1.500"/><rect x="1" y="30" width="1.500" height="1.500"/></g></svg>
<!-- views -->
<div class="a" style="left:1009.500px;top:556px;width:1006px;height:1392px;background:#000"></div>
<div class="a" style="left:2017.500px;top:1301.8px;width:1005.500px;height:648px;background:#000"></div>
<div class="a" style="left:2015.500px;top:1304px;width:2px;height:644px;background:#e8e8e8"></div>
<div class="a" style="left:2017.500px;top:556px;width:1005.500px;height:696px;background:linear-gradient(#7477bb 0,#7779bd 8%,#c4c4e9 100%)"></div>
<div class="a" style="left:1009.5px;top:556px;width:1006px;height:52px;background:linear-gradient(#ef4d37 0,#d9432f 22%,#f24d34 50%,#f95034 90%,#b83420 100%)"></div>
<svg style="left:1021.5px;top:572px" width="30" height="18" viewBox="0 0 30 18"><path d="M1 9.300H10" stroke="#3c0600" stroke-width="1.100" opacity=".55"/><ellipse cx="11.500" cy="9.300" rx="3.300" ry="7" fill="#3c0600" opacity=".88"/><ellipse cx="10.800" cy="8.800" rx="1.300" ry="4" fill="#fff" opacity=".3"/><path d="M12 5.500h11.500v-1.800c1.800.3 3 1.300 3 5.600s-1.200 5.300-3 5.600V13H12z" fill="#3c0600" opacity=".85"/></svg>
<div class="t" style="left:1058.5px;top:572.5px;width:40px;text-align:center;font-size:20.500px;color:#3c0600">R</div>
<svg style="left:1104.0px;top:564px" width="34" height="34" viewBox="0 0 34 34"><defs><linearGradient id="cgR" x1="0" y1="0" x2="1" y2="1"><stop offset="0" stop-color="#fff" stop-opacity=".75"/><stop offset=".5" stop-color="#3c0600" stop-opacity=".55"/><stop offset="1" stop-color="#3c0600" stop-opacity=".95"/></linearGradient></defs><rect x="6" y="6" width="22" height="22" fill="url(#cgR)"/><path d="M17 0v4M17 30v4M0 17h4M30 17h4" stroke="#3c0600" stroke-width="1.800"/><path d="M9 6v22M12.500 6v22M16 6v22M19.500 6v22M23 6v22M26 6v22M6 9h22M6 12.500h22M6 16h22M6 19.500h22M6 23h22M6 26h22" stroke="#3c0600" stroke-width=".7" opacity=".55"/></svg>
<div class="a" style="left:1165.5px;top:569px;width:26px;height:25px;border:2px solid #3c0600;border-top-width:7px"></div>
<div class="sl" style="left:1218px;top:577px;width:642px;background:linear-gradient(90deg,#5aa5d7 0,#5aa5d7 322px,#e2e2e0 322px)"></div>
<div class="hd" style="left:1532.5px;top:570.5px"></div>
<div class="t" style="left:1872px;top:571px;font-size:20.700px;color:#3c0600">S: 0.0000mm</div>
<div class="a" style="left:1009.5px;top:1251.500px;width:1006px;height:52.500px;background:linear-gradient(#86c866 0,#68a845 22%,#72b64b 50%,#76bb4e 90%,#4d8030 100%)"></div>
<svg style="left:1021.5px;top:1269.8px" width="30" height="18" viewBox="0 0 30 18"><path d="M1 9.300H10" stroke="#0c2206" stroke-width="1.100" opacity=".55"/><ellipse cx="11.500" cy="9.300" rx="3.300" ry="7" fill="#0c2206" opacity=".88"/><ellipse cx="10.800" cy="8.800" rx="1.300" ry="4" fill="#fff" opacity=".3"/><path d="M12 5.500h11.500v-1.800c1.800.3 3 1.300 3 5.600s-1.200 5.300-3 5.600V13H12z" fill="#0c2206" opacity=".85"/></svg>
<div class="t" style="left:1058.5px;top:1270.3px;width:40px;text-align:center;font-size:20.500px;color:#0c2206">G</div>
<svg style="left:1104.0px;top:1261.8px" width="34" height="34" viewBox="0 0 34 34"><defs><linearGradient id="cgG" x1="0" y1="0" x2="1" y2="1"><stop offset="0" stop-color="#fff" stop-opacity=".75"/><stop offset=".5" stop-color="#0c2206" stop-opacity=".55"/><stop offset="1" stop-color="#0c2206" stop-opacity=".95"/></linearGradient></defs><rect x="6" y="6" width="22" height="22" fill="url(#cgG)"/><path d="M17 0v4M17 30v4M0 17h4M30 17h4" stroke="#0c2206" stroke-width="1.800"/><path d="M9 6v22M12.500 6v22M16 6v22M19.500 6v22M23 6v22M26 6v22M6 9h22M6 12.500h22M6 16h22M6 19.500h22M6 23h22M6 26h22" stroke="#0c2206" stroke-width=".7" opacity=".55"/></svg>
<div class="a" style="left:1165.5px;top:1266.8px;width:26px;height:25px;border:2px solid #0c2206;border-top-width:7px"></div>
<div class="sl" style="left:1217px;top:1274.8px;width:641px;background:linear-gradient(90deg,#5aa5d7 0,#5aa5d7 321px,#e2e2e0 321px)"></div>
<div class="hd" style="left:1530.5px;top:1268.3px"></div>
<div class="t" style="left:1869px;top:1268.8px;font-size:20.700px;color:#0c2206">A: 0.0000mm</div>
<div class="a" style="left:2017.5px;top:1251.500px;width:1005.5px;height:52.500px;background:linear-gradient(#f2de6a 0,#d9c23c 22%,#ead248 50%,#efd94c 90%,#a8952a 100%)"></div>
<svg style="left:2029.5px;top:1269.8px" width="30" height="18" viewBox="0 0 30 18"><path d="M1 9.300H10" stroke="#2a2200" stroke-width="1.100" opacity=".55"/><ellipse cx="11.500" cy="9.300" rx="3.300" ry="7" fill="#2a2200" opacity=".88"/><ellipse cx="10.800" cy="8.800" rx="1.300" ry="4" fill="#fff" opacity=".3"/><path d="M12 5.500h11.500v-1.800c1.800.3 3 1.300 3 5.600s-1.200 5.300-3 5.600V13H12z" fill="#2a2200" opacity=".85"/></svg>
<div class="t" style="left:2066.5px;top:1270.3px;width:40px;text-align:center;font-size:20.500px;color:#2a2200">Y</div>
<svg style="left:2112.0px;top:1261.8px" width="34" height="34" viewBox="0 0 34 34"><defs><linearGradient id="cgY" x1="0" y1="0" x2="1" y2="1"><stop offset="0" stop-color="#fff" stop-opacity=".75"/><stop offset=".5" stop-color="#2a2200" stop-opacity=".55"/><stop offset="1" stop-color="#2a2200" stop-opacity=".95"/></linearGradient></defs><rect x="6" y="6" width="22" height="22" fill="url(#cgY)"/><path d="M17 0v4M17 30v4M0 17h4M30 17h4" stroke="#2a2200" stroke-width="1.800"/><path d="M9 6v22M12.500 6v22M16 6v22M19.500 6v22M23 6v22M26 6v22M6 9h22M6 12.500h22M6 16h22M6 19.500h22M6 23h22M6 26h22" stroke="#2a2200" stroke-width=".7" opacity=".55"/></svg>
<div class="a" style="left:2173.5px;top:1266.8px;width:26px;height:25px;border:2px solid #2a2200;border-top-width:7px"></div>
<div class="sl" style="left:2226px;top:1274.8px;width:642px;background:linear-gradient(90deg,#5aa5d7 0,#5aa5d7 321.5px,#e2e2e0 321.5px)"></div>
<div class="hd" style="left:2540.0px;top:1268.3px"></div>
<div class="t" style="left:2880px;top:1268.8px;font-size:20.700px;color:#2a2200">L: 0.0000mm</div>
<div class="a" style="left:2017.5px;top:555px;width:1005.5px;height:52.500px;background:linear-gradient(#8a96f2 0,#6a77d6 22%,#7a88ee 55%,#7f8cf2 85%,#6a72c8 100%)"></div>
<svg style="left:2029.5px;top:571px" width="30" height="18" viewBox="0 0 30 18"><path d="M1 9.300H10" stroke="#14143c" stroke-width="1.100" opacity=".55"/><ellipse cx="11.500" cy="9.300" rx="3.300" ry="7" fill="#14143c" opacity=".88"/><ellipse cx="10.800" cy="8.800" rx="1.300" ry="4" fill="#fff" opacity=".3"/><path d="M12 5.500h11.500v-1.800c1.800.3 3 1.300 3 5.600s-1.200 5.300-3 5.600V13H12z" fill="#14143c" opacity=".85"/></svg>
<div class="t" style="left:2066.5px;top:571.5px;width:40px;text-align:center;font-size:20.500px;color:#14143c">1</div>
<svg style="left:2112.0px;top:563px" width="34" height="34" viewBox="0 0 34 34"><rect x="2" y="2" width="30" height="30" fill="#fff" opacity=".12"/><circle cx="17" cy="17" r="8.500" fill="none" stroke="#14143c" stroke-width="1.800"/><rect x="13" y="13" width="8" height="8" fill="none" stroke="#14143c" stroke-width="1.800"/><path d="M17 1v8M17 25v8M1 17h8M25 17h8" stroke="#14143c" stroke-width="1.800"/></svg>
<div class="a" style="left:2173.5px;top:568px;width:26px;height:25px;border:2px solid #14143c;border-top-width:7px"></div>
<svg style="left:2017px;top:606px" width="1006" height="646" viewBox="2017 606 1006 646"><g fill="none" stroke="#e32ee6" stroke-width="1.800"><rect x="2220" y="628.500" width="602" height="602"/><rect x="2320.500" y="729" width="400" height="400"/><path d="M2220 628.500L2320.500 729M2822 628.500L2720.500 729M2220 1230.500L2320.500 1129M2822 1230.500L2720.500 1129"/></g>
<g fill="#fff" font-family="Liberation Sans" text-anchor="middle"><text x="2520" y="667" font-size="38">S</text><text x="2243.500" y="943.500" font-size="38">R</text><text x="2796" y="943.500" font-size="38">L</text><text x="2520" y="940" font-size="29">P</text><text x="2519" y="1218" font-size="36" font-style="italic">I</text></g></svg>
<!-- status bar -->
<div class="a" style="left:324px;top:1948px;width:2699px;height:60px;background:#efefee"></div>
<div class="a" style="left:2935px;top:1954px;width:53px;height:51px;border:2px solid #bdbdbb;border-radius:4px;background:linear-gradient(#f8f8f7,#eaeae9)"></div>
<svg style="left:2942px;top:1960px" width="40" height="40" viewBox="0 0 40 40"><circle cx="20" cy="20" r="18.500" fill="#8e8e8e" stroke="#b8b8b8" stroke-width="2"/><path d="M12.500 12.500l15 15M27.500 12.500l-15 15" stroke="#fff" stroke-width="5"/></svg>

<!-- taskbar -->
<div class="a" style="left:68px;top:2034px;width:3226px;height:74px;background:#eff1f0"></div>
<svg style="left:86px;top:2049px" width="44" height="44" viewBox="0 0 44 44"><circle cx="11" cy="6" r="2.600" fill="#232629"/><circle cx="6" cy="20" r="4.200" fill="#232629"/><circle cx="16" cy="36.500" r="5.200" fill="#232629"/><path d="M22 5l12 11.500L24 27" fill="none" stroke="#232629" stroke-width="6"/></svg>
<div class="a" style="left:165px;top:2047px;width:47px;height:47px;background:linear-gradient(135deg,#3a3f44,#1e2124)"></div>
<div class="a" style="left:171px;top:2062px;width:33px;height:3px;background:#3daee9"></div><div class="a" style="left:196px;top:2059px;width:8px;height:8px;border-radius:4px;background:#fff"></div>
<div class="a" style="left:171px;top:2076px;width:33px;height:3px;background:#5a5f63"></div><div class="a" style="left:171px;top:2076px;width:12px;height:3px;background:#3daee9"></div><div class="a" style="left:179px;top:2073px;width:8px;height:8px;border-radius:4px;background:#fff"></div>
<svg style="left:255px;top:2047px" width="42" height="48" viewBox="0 0 42 48"><path d="M12 14V9a9 9 0 0 1 18 0v5" fill="none" stroke="#2a8ad6" stroke-width="2.500"/><path d="M2 13h38l-1.500 34H3.500z" fill="#2196f3"/><path d="M2 13h38l-.3 6H2.300z" fill="#42a5f5"/><path d="M19 24l6 6-6 6" fill="none" stroke="#cfe8fc" stroke-width="2.500"/><circle cx="14" cy="26" r="1.300" fill="#cfe8fc"/><circle cx="13" cy="32" r="1.300" fill="#cfe8fc"/><circle cx="17" cy="39" r="1.300" fill="#cfe8fc"/></svg>
<svg style="left:338px;top:2047px" width="51" height="47" viewBox="0 0 51 47"><path d="M0 2h20l4 5h27v40H0z" fill="#1d79b9"/><rect x="3" y="8" width="45" height="8" fill="#f4f8fb"/><path d="M0 14h51v33H0z" fill="#3daee9"/><path d="M0 14h51v33H0z" fill="url(#fg)"/><defs><linearGradient id="fg" x1="0" y1="0" x2="1" y2="1"><stop offset="0" stop-color="#5fc0f2"/><stop offset="1" stop-color="#2a93d4"/></linearGradient></defs></svg>
<svg style="left:422.500px;top:2043px" width="55" height="55" viewBox="0 0 48 48"><circle cx="24" cy="24" r="22" fill="#fff"/><path d="M24 2a22 22 0 0 1 19.050 11H24a11 11 0 0 0 -9.530 5.500L5 13A22 22 0 0 1 24 2z" fill="#ea4335"/><path d="M43.050 13a22 22 0 0 1 -19.050 33l9.530-16.500A11 11 0 0 0 33.530 18.500 11 11 0 0 0 24 13z" fill="#fbbc04"/><path d="M24 46A22 22 0 0 1 4.950 13l9.520 16.500A11 11 0 0 0 33.530 29.500z" fill="#34a853"/><circle cx="24" cy="24" r="10" fill="#fff"/><circle cx="24" cy="24" r="8" fill="#1a73e8"/></svg>
<div class="a" style="left:496px;top:2034px;width:84px;height:74px;background:#cdcfcf;border-top:2px solid #c3c5c5"></div>
<div class="a" style="left:583px;top:2034px;width:84px;height:74px;background:#cdcfcf;border-top:2px solid #c3c5c5"></div>
<div class="a" style="left:670.500px;top:2034px;width:84px;height:74px;background:#cdcfcf;border-top:2px solid #c3c5c5"></div>
<div class="a" style="left:757.500px;top:2034px;width:84px;height:74px;background:#a3d1ee;border-top:3px solid #4db2ea"></div>
<div class="a" style="left:513.500px;top:2048px;width:48px;height:46px;background:linear-gradient(#3b4144,#2a2e30)"></div>
<svg style="left:528px;top:2058px" width="20" height="28"><path d="M3 2l13 12L3 26" fill="none" stroke="#8c9194" stroke-width="2"/></svg>
<svg style="left:528px;top:2090px" width="18" height="18"><circle cx="9" cy="9" r="8" fill="#3db76a"/><path d="M9 4.500v9M4.500 9h9" stroke="#fff" stroke-width="2"/></svg>
<svg style="left:602px;top:2045px" width="46" height="51" viewBox="0 0 34 36" preserveAspectRatio="none"><path d="M17 2L31.500 11v14.500L17 34.500 2.500 25.500V11z" fill="#fff" stroke="#1e1e1e" stroke-width="2" stroke-linejoin="round"/><path d="M2.500 25.500L17 17M17 26.500l14.500-8.300M17 26.500v8M7.500 22.800l9.500 3.700" fill="none" stroke="#1e1e1e" stroke-width="1.900" stroke-linejoin="round"/><path d="M17 2L31.500 11 17 19.500 2.500 11z" fill="#f58a14" stroke="#3a2408" stroke-width="1.600" stroke-linejoin="round"/><path d="M17 26.500l14.500-8.300V11l-11 6.400-13.500 5.600z" fill="#d4d6d2" opacity="0"/></svg>
<div class="t" style="left:688px;top:2055.500px;font-size:30px;font-weight:bold;color:#f4f4f4;letter-spacing:-4.200px;transform:rotate(-6deg);text-shadow:0 0 2px #8a8a8a,1.500px 2px 1px #9a9a9a">RViz</div>
<svg style="left:771.5px;top:2042px" width="56" height="56" viewBox="0 0 48 48"><defs><radialGradient id="slc" cx=".38" cy=".4" r=".75"><stop offset="0" stop-color="#c6cfe6"/><stop offset="1" stop-color="#a3afcf"/></radialGradient></defs><circle cx="24" cy="24" r="22.800" fill="url(#slc)" stroke="#4a5670" stroke-width="1.500"/><path d="M19 31V2.200A22.800 22.800 0 0 1 45.700 31z" fill="#e9ecf4"/><path d="M19 31V2.200l4.500-.8V27z" fill="#5a6580"/><path d="M23.500 1.500l2.500 1V25l-2.500 2z" fill="#8a94ad"/><path d="M19 31l7-6h20.500c.3 2 .2 4-.3 6z" fill="#fbfbfd" stroke="#7a849c" stroke-width=".8"/><path d="M19 31h26.800" stroke="#4a5670" stroke-width="1.300"/><path d="M19 31V2.200" stroke="#3a445c" stroke-width="1.600"/><rect x="26" y="4" width="6.500" height="7" fill="#f2de3a"/><rect x="26" y="11" width="6.500" height="7" fill="#2fa862"/><rect x="26" y="18" width="6.500" height="7" fill="#d8302a"/><rect x="32.500" y="11" width="6.500" height="7" fill="#e87a30"/><rect x="32.500" y="18" width="6.500" height="7" fill="#e06428"/><rect x="39" y="18" width="5.500" height="7" fill="#2a6cc4"/><path d="M26 11h13M26 18h18.500M32.500 4v21M39 11v14M29.200 4v21M35.700 11v14M26 7.500h6.500M26 14.500h13M26 21.500h18.500" stroke="#000" stroke-opacity=".22" stroke-width=".6"/></svg>
<!-- tray -->
<svg style="left:2839px;top:2055px" width="30" height="32" viewBox="0 0 30 32"><path d="M15 4.500c-5 0-7.500 4-7.500 8.500v6L3.500 23.500h23L22.500 19v-6c0-4.500-2.500-8.500-7.500-8.500z" fill="none" stroke="#232629" stroke-width="2"/><path d="M15 1.500v3" stroke="#232629" stroke-width="2"/><path d="M11.500 27h7l-3.500 3.500z" fill="#232629"/><path d="M5 3C2.500 5.500 1.500 8.500 1.500 11M25 3c2.500 2.500 3.500 5.500 3.500 8" fill="none" stroke="#232629" stroke-width="1.500"/><path d="M7.500 5C6 6.500 5 8.500 5 10.500M22.500 5C24 6.500 25 8.500 25 10.500" fill="none" stroke="#232629" stroke-width="1.300"/></svg>
<svg style="left:2889px;top:2055px" width="32" height="32" viewBox="0 0 32 32"><circle cx="15" cy="15.500" r="12.500" fill="none" stroke="#232629" stroke-width="2"/><path d="M15 7l7 8h-4v8h-6v-8H8z" fill="#232629"/><circle cx="24" cy="24.500" r="5" fill="#3daee9"/></svg>
<svg style="left:2942px;top:2056px" width="26" height="30" viewBox="0 0 26 30"><rect x="1.500" y="5" width="23" height="23.500" fill="none" stroke="#232629" stroke-width="2.200"/><rect x="6.500" y="1" width="13" height="7.500" fill="#232629"/><path d="M6 14h13M6 19h11M6 24h7" stroke="#232629" stroke-width="2"/></svg>
<svg style="left:2990px;top:2055px" width="30" height="32" viewBox="0 0 30 32"><path d="M1.500 10.500h6L16 2v28L7.500 21.500h-6z" fill="#232629"/><path d="M19.500 9.500a9 9 0 0 1 0 13" fill="none" stroke="#232629" stroke-width="2"/><path d="M22.500 4.500a15 15 0 0 1 0 23" fill="none" stroke="#232629" stroke-width="2"/></svg>
<svg style="left:3040px;top:2063px" width="24" height="16"><path d="M1.500 14L12 3l10.500 11" fill="none" stroke="#232629" stroke-width="2.200"/></svg>
<div class="t" style="left:3092px;top:2048px;font-size:26.900px;color:#232629">6:01 PM</div>
<div class="t" style="left:3104.500px;top:2076px;font-size:21px;letter-spacing:1.100px;color:#232629">4/16/26</div>
<svg style="left:3238px;top:2057px" width="29" height="29"><rect x="1.500" y="1.500" width="26" height="26" fill="none" stroke="#232629" stroke-width="2"/><path d="M5 23h19" stroke="#232629" stroke-width="2"/></svg>
</div></div>
</body>
</html>
